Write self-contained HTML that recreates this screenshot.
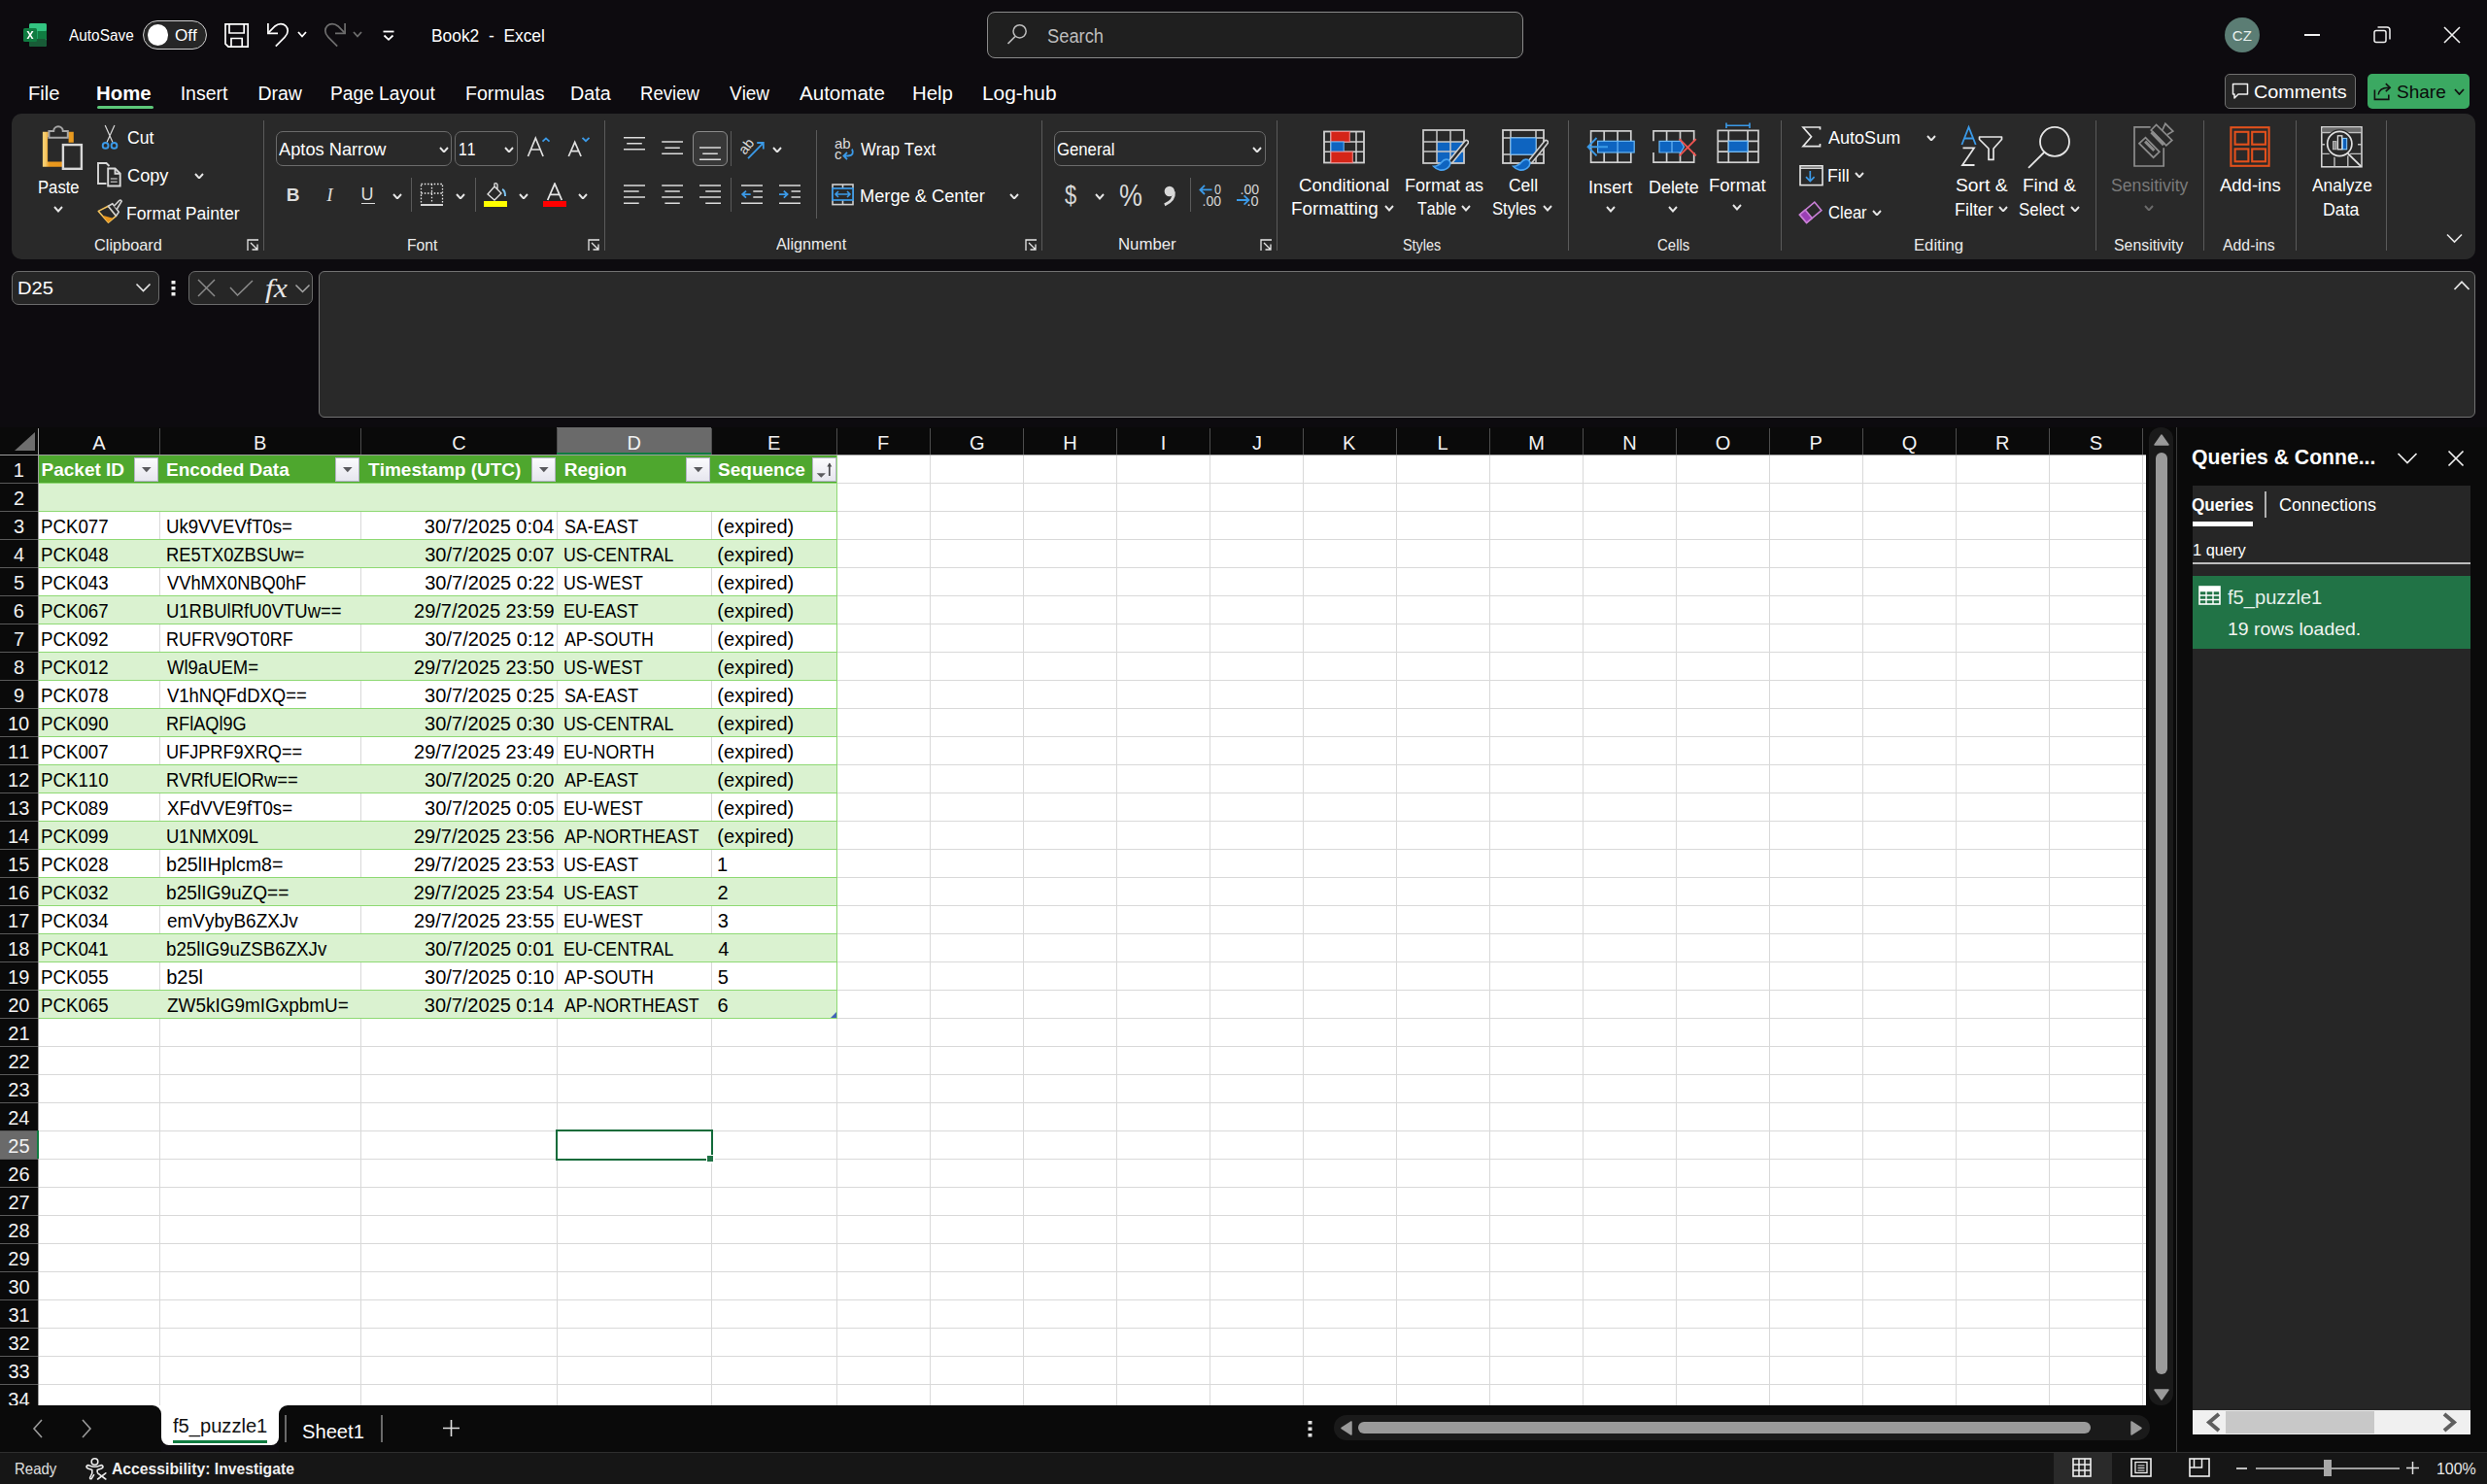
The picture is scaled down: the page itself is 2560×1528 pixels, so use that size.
<!DOCTYPE html><html><head><meta charset="utf-8"><title>Book2 - Excel</title><style>*{margin:0;padding:0}
html,body{width:2560px;height:1528px;overflow:hidden}
body{background:#0d0b0f;position:relative;font-family:"Liberation Sans",sans-serif;font-kerning:none;font-variant-ligatures:none;-webkit-font-smoothing:antialiased}
.t{position:absolute;white-space:pre;line-height:1;transform-origin:0 0}
.b{position:absolute;display:block}
</style></head><body><svg class="b" style="left:24px;top:24px;" width="24" height="24" viewBox="0 0 24 24">
      <rect x="6" y="0" width="18" height="24" rx="2" fill="#21a366"/>
      <rect x="6" y="0" width="18" height="8" rx="2" fill="#33c481"/>
      <rect x="6" y="8" width="9" height="8" fill="#21a366"/>
      <rect x="15" y="8" width="9" height="8" fill="#107c41"/>
      <rect x="6" y="16" width="18" height="8" rx="2" fill="#185c37"/>
      <rect x="0" y="5" width="14" height="14" rx="1.5" fill="#107c41"/>
      <path d="M3.5 8 L6 12 L3.5 16 H5.4 L7 13.3 L8.6 16 H10.5 L8 12 L10.5 8 H8.6 L7 10.7 L5.4 8 Z" fill="#fff"/></svg><div class="t" style="left:70.97px;top:28.96px;font-size:16px;color:#ffffff;transform:scaleX(0.9615);">AutoSave</div><div class="b" style="left:147px;top:21px;width:66px;height:30px;background:#262626;border:1.5px solid #d0d0d0;box-sizing:border-box;border-radius:15px;"></div><div class="b" style="left:151.5px;top:25px;width:21.5px;height:21.5px;background:#ffffff;border-radius:11px;"></div><div class="t" style="left:180.19px;top:28.96px;font-size:16px;color:#ffffff;transform:scaleX(1.0679);">Off</div><svg class="b" style="left:230px;top:23px;" width="27" height="27" viewBox="0 0 27 27"><path d="M2 1.8 H25.2 V25.2 H5 L2 22.2 Z M6 1.8 V11 H21.2 V1.8 M8 25.2 V16.5 H19.2 V25.2" stroke="#ffffff" stroke-width="1.7" fill="none"/></svg><svg class="b" style="left:274px;top:23px;" width="26" height="26" viewBox="0 0 26 26"><path d="M1.9 1 V11.3 H12" stroke="#ffffff" stroke-width="1.7" fill="none"/><path d="M2.4 10.6 L9 4 C11 2.3 13 1.6 15 1.6 C19 1.6 22.2 4.6 22.2 8.8 C22.2 11.5 21 13.4 19 15.3 L9.8 24.6" stroke="#ffffff" stroke-width="1.7" fill="none"/></svg><svg class="b" style="left:305.5px;top:32px;" width="10" height="6.5" viewBox="0 0 10 6.5"><path d="M1 1 L5.0 5.5 L9 1" stroke="#ffffff" stroke-width="1.8" fill="none"/></svg><svg class="b" style="left:331px;top:23px;" width="26" height="26" viewBox="0 0 26 26"><path d="M24.1 1 V11.3 H14" stroke="#6e6e6e" stroke-width="1.7" fill="none"/><path d="M23.6 10.6 L17 4 C15 2.3 13 1.6 11 1.6 C7 1.6 3.8 4.6 3.8 8.8 C3.8 11.5 5 13.4 7 15.3 L16.2 24.6" stroke="#6e6e6e" stroke-width="1.7" fill="none"/></svg><svg class="b" style="left:362.5px;top:32px;" width="10" height="6.5" viewBox="0 0 10 6.5"><path d="M1 1 L5.0 5.5 L9 1" stroke="#6e6e6e" stroke-width="1.8" fill="none"/></svg><svg class="b" style="left:393px;top:31px;" width="14" height="12" viewBox="0 0 14 12"><path d="M1.5 1.5 H12.5" stroke="#ffffff" stroke-width="1.8"/><path d="M2.5 5.5 L7 9.8 L11.5 5.5" stroke="#ffffff" stroke-width="1.8" fill="none"/></svg><div class="t" style="left:443.57px;top:27.54px;font-size:18.5px;color:#ffffff;transform:scaleX(0.9395);">Book2  -  Excel</div><div class="b" style="left:1016px;top:12px;width:552px;height:48px;background:#1f1f1f;border:1.5px solid #8a8a8a;box-sizing:border-box;border-radius:8px;"></div><svg class="b" style="left:1035px;top:22px;" width="24" height="26" viewBox="0 0 24 26"><circle cx="14.6" cy="10.3" r="6.6" stroke="#bdbdbd" stroke-width="1.5" fill="none"/><path d="M10 15.5 L2.5 23" stroke="#bdbdbd" stroke-width="1.7"/></svg><div class="t" style="left:1078.17px;top:27.15px;font-size:20.5px;color:#bdbdbd;transform:scaleX(0.8933);">Search</div><div class="b" style="left:2290px;top:18px;width:36px;height:36px;background:#5b7d74;border-radius:18px;"></div><div class="t" style="left:2297.86px;top:29.30px;font-size:15px;color:#e8f0ee;">CZ</div><div class="b" style="left:2372px;top:35px;width:16px;height:1.5px;background:#f0f0f0;"></div><svg class="b" style="left:2443px;top:27px;" width="18" height="18" viewBox="0 0 18 18"><rect x="1" y="4.5" width="12" height="12" rx="2" stroke="#f0f0f0" stroke-width="1.5" fill="none"/><path d="M4.5 1 H14 Q17 1 17 4 V13.5" stroke="#f0f0f0" stroke-width="1.5" fill="none"/></svg><svg class="b" style="left:2515px;top:27px;" width="18" height="18" viewBox="0 0 18 18"><path d="M1 1 L17 17 M17 1 L1 17" stroke="#f0f0f0" stroke-width="1.6"/></svg>
<div class="t" style="left:29.34px;top:87.49px;font-size:19.5px;color:#ffffff;transform:scaleX(1.0361);">File</div><div class="t" style="left:99.14px;top:87.49px;font-size:19.5px;color:#ffffff;font-weight:700;transform:scaleX(1.0439);">Home</div><div class="t" style="left:185.70px;top:87.49px;font-size:19.5px;color:#ffffff;">Insert</div><div class="t" style="left:265.40px;top:87.49px;font-size:19.5px;color:#ffffff;">Draw</div><div class="t" style="left:340.43px;top:87.49px;font-size:19.5px;color:#ffffff;transform:scaleX(0.9836);">Page Layout</div><div class="t" style="left:479.09px;top:87.49px;font-size:19.5px;color:#ffffff;transform:scaleX(1.0043);">Formulas</div><div class="t" style="left:587.38px;top:87.49px;font-size:19.5px;color:#ffffff;transform:scaleX(1.0103);">Data</div><div class="t" style="left:659.08px;top:87.49px;font-size:19.5px;color:#ffffff;transform:scaleX(0.9522);">Review</div><div class="t" style="left:750.92px;top:87.49px;font-size:19.5px;color:#ffffff;transform:scaleX(0.9709);">View</div><div class="t" style="left:822.96px;top:87.49px;font-size:19.5px;color:#ffffff;transform:scaleX(1.0538);">Automate</div><div class="t" style="left:938.93px;top:87.49px;font-size:19.5px;color:#ffffff;transform:scaleX(1.0455);">Help</div><div class="t" style="left:1010.89px;top:87.49px;font-size:19.5px;color:#ffffff;transform:scaleX(1.0688);">Log-hub</div><div class="b" style="left:100px;top:109px;width:58px;height:3px;background:#5dc779;border-radius:1.5px;"></div><div class="b" style="left:2290px;top:76px;width:135px;height:36px;background:#262626;border:1px solid #707070;box-sizing:border-box;border-radius:5px;"></div><svg class="b" style="left:2297px;top:85px;" width="18" height="18" viewBox="0 0 18 18"><path d="M1.5 1.5 H16.5 V12 H7 L3 16 V12 H1.5 Z" stroke="#f0f0f0" stroke-width="1.5" fill="none" stroke-linejoin="round"/></svg><div class="t" style="left:2319.99px;top:85.84px;font-size:18.5px;color:#ffffff;transform:scaleX(1.0703);">Comments</div><div class="b" style="left:2437px;top:76px;width:105px;height:36px;background:#3ba962;border-radius:5px;"></div><svg class="b" style="left:2440px;top:84px;" width="26" height="22" viewBox="0 0 26 22"><path d="M4.4 8.6 V18.4 H18.8 V13.4" stroke="#111" stroke-width="1.6" fill="none"/><path d="M8.2 13.5 C8.8 8.4 12.5 6 19.2 6.2" stroke="#111" stroke-width="1.6" fill="none"/><path d="M15.8 2.2 L20.2 6.2 L15.8 10.2" stroke="#111" stroke-width="1.6" fill="none"/></svg><div class="t" style="left:2467.14px;top:85.84px;font-size:18.5px;color:#0a0a0a;transform:scaleX(1.0272);">Share</div><svg class="b" style="left:2525.5px;top:91px;" width="11" height="7" viewBox="0 0 11 7"><path d="M1 1 L5.5 6 L10 1" stroke="#111" stroke-width="1.8" fill="none"/></svg>
<div class="b" style="left:12px;top:117px;width:2536px;height:150px;background:#292929;border-radius:10px;"></div><svg class="b" style="left:40px;top:125px;" width="50" height="55" viewBox="0 0 50 55">
      <defs><linearGradient id="og" x1="0" x2="1"><stop offset="0" stop-color="#f7cd6e"/><stop offset="0.25" stop-color="#ea9a1e"/><stop offset="1" stop-color="#e8951c"/></linearGradient></defs>
      <path d="M17 13.3 H6.5 V44.2 H24" stroke="url(#og)" stroke-width="5.2" fill="none"/>
      <path d="M28 13.3 H33.2 V21.7" stroke="#e99a1f" stroke-width="5.2" fill="none"/>
      <path d="M10.4 16.8 V10 H15.2 A4.8 4.8 0 0 1 24.8 10 H29.8 V16.8 Z" stroke="#a6a6a6" stroke-width="2" fill="#292929"/>
      <rect x="24.9" y="24.1" width="19" height="24.7" stroke="#d8d8d8" stroke-width="2.4" fill="#292929"/></svg><div class="t" style="left:39.13px;top:185.19px;font-size:17.5px;color:#ffffff;transform:scaleX(0.9521);">Paste</div><svg class="b" style="left:55px;top:212px;" width="10" height="6.5" viewBox="0 0 10 6.5"><path d="M1 1 L5.0 5.5 L9 1" stroke="#e6e6e6" stroke-width="1.9" fill="none"/></svg><svg class="b" style="left:100px;top:125px;" width="26" height="30" viewBox="0 0 26 30"><path d="M8.2 3.9 L16 21.6 M17.9 3.9 L10 21.6" stroke="#d8d8d8" stroke-width="1.2" fill="none"/>
       <circle cx="8.6" cy="24.9" r="2.9" stroke="#3b9ae8" stroke-width="1.9" fill="none"/><circle cx="17.5" cy="24.9" r="2.9" stroke="#3b9ae8" stroke-width="1.9" fill="none"/></svg><div class="t" style="left:130.60px;top:134.19px;font-size:17.5px;color:#ffffff;transform:scaleX(1.0108);">Cut</div><svg class="b" style="left:100px;top:167px;" width="26" height="27" viewBox="0 0 26 27"><path d="M9.5 22 H1 V1 H9.5 L12.5 4" stroke="#d8d8d8" stroke-width="1.9" fill="none"/>
       <path d="M11.2 6.5 H18.5 L23.7 11.7 V24.5 H11.2 Z" stroke="#d8d8d8" stroke-width="1.9" fill="none"/><path d="M18.5 6.5 V11.7 H23.7" stroke="#d8d8d8" stroke-width="1.9" fill="none"/><path d="M13.8 17 H20.7 M13.8 20.2 H20.7" stroke="#a8a8a8" stroke-width="1.5" fill="none"/></svg><div class="t" style="left:130.58px;top:173.19px;font-size:17.5px;color:#ffffff;transform:scaleX(1.0393);">Copy</div><svg class="b" style="left:199.5px;top:177.5px;" width="10" height="6.5" viewBox="0 0 10 6.5"><path d="M1 1 L5.0 5.5 L9 1" stroke="#e6e6e6" stroke-width="1.9" fill="none"/></svg><svg class="b" style="left:100px;top:205px;" width="27" height="27" viewBox="0 0 27 27"><path d="M1.3 12.4 L11.4 7.2 L19.5 17.3 L11.4 24.1 Z" stroke="#f3c35e" stroke-width="1.6" fill="#292929" stroke-linejoin="round"/>
      <path d="M5.5 16.8 L16.5 19.8 L11.4 24.1 Z" fill="#e8951c"/>
      <path d="M11.4 7.2 L15.8 4.7 L22.3 13.2 L19.5 17.3 Z" stroke="#d0d0d0" stroke-width="1.6" fill="#292929" stroke-linejoin="round"/>
      <path d="M17.3 7.2 L22.6 1.6 Q24.2 0.6 25.2 2.2 L20.5 10" stroke="#d0d0d0" stroke-width="1.6" fill="#292929"/></svg><div class="t" style="left:130.25px;top:212.19px;font-size:17.5px;color:#ffffff;transform:scaleX(1.0078);">Format Painter</div><div class="t" style="left:97.17px;top:243.61px;font-size:17px;color:#ececec;transform:scaleX(0.9604);">Clipboard</div><svg class="b" style="left:254px;top:246px;" width="13" height="13" viewBox="0 0 13 13"><path d="M1 12 V1 H12" stroke="#e6e6e6" stroke-width="1.3" fill="none"/><path d="M4 4 L11 11 M11 5.5 V11 H5.5" stroke="#e6e6e6" stroke-width="1.3" fill="none"/></svg><div class="b" style="left:271px;top:124px;width:1px;height:134px;background:#5a5a5a;"></div><div class="b" style="left:284px;top:135px;width:181px;height:36px;background:#292929;border:1px solid #6b6b6b;box-sizing:border-box;border-radius:7px;"></div><div class="t" style="left:287.46px;top:146.19px;font-size:17.5px;color:#ffffff;transform:scaleX(1.0423);">Aptos Narrow</div><svg class="b" style="left:451.5px;top:150.5px;" width="10" height="6.5" viewBox="0 0 10 6.5"><path d="M1 1 L5.0 5.5 L9 1" stroke="#e6e6e6" stroke-width="1.9" fill="none"/></svg><div class="b" style="left:468px;top:135px;width:65px;height:36px;background:#292929;border:1px solid #6b6b6b;box-sizing:border-box;border-radius:7px;"></div><div class="t" style="left:472.30px;top:146.19px;font-size:17.5px;color:#ffffff;transform:scaleX(0.8971);">11</div><svg class="b" style="left:519px;top:150.5px;" width="10" height="6.5" viewBox="0 0 10 6.5"><path d="M1 1 L5.0 5.5 L9 1" stroke="#e6e6e6" stroke-width="1.9" fill="none"/></svg><svg class="b" style="left:542px;top:139px;" width="26" height="24" viewBox="0 0 26 24"><path d="M1.5 22 L9.3 3.2 L17.1 22 M4.6 15 H14" stroke="#e0e0e0" stroke-width="1.7" fill="none"/><path d="M16.5 6.6 L20 3.4 L23.5 6.6" stroke="#3b9ae8" stroke-width="1.8" fill="none"/></svg><svg class="b" style="left:584px;top:139px;" width="24" height="24" viewBox="0 0 24 24"><path d="M1.3 22 L7.7 7.4 L14.1 22 M3.8 16.6 H11.6" stroke="#e0e0e0" stroke-width="1.7" fill="none"/><path d="M15.5 2.8 L19 6.2 L22.5 2.8" stroke="#3b9ae8" stroke-width="1.8" fill="none"/></svg><div class="t" style="left:294.73px;top:190.92px;font-size:19px;color:#dcdcdc;font-weight:700;">B</div><div class="t" style="left:336.25px;top:190.92px;font-size:19px;color:#dcdcdc;font-style:italic;font-family:'Liberation Serif'">I</div><div class="t" style="left:371.61px;top:190.76px;font-size:18px;color:#dcdcdc;">U</div><div class="b" style="left:372px;top:208.5px;width:14px;height:1.5px;background:#dcdcdc;"></div><svg class="b" style="left:403.5px;top:198.5px;" width="10" height="6.5" viewBox="0 0 10 6.5"><path d="M1 1 L5.0 5.5 L9 1" stroke="#e6e6e6" stroke-width="1.9" fill="none"/></svg><div class="b" style="left:423px;top:183px;width:1px;height:35px;background:#5a5a5a;"></div><svg class="b" style="left:432px;top:188px;" width="25" height="25" viewBox="0 0 25 25"><path d="M1.5 1.5 H23.5 V20.5 M1.5 20.5 V1.5 M12.5 1.5 V20.5 M1.5 11 H23.5" stroke="#e6e6e6" stroke-width="1.3" stroke-dasharray="1.6 1.7" fill="none"/><path d="M1 23 H24" stroke="#e6e6e6" stroke-width="1.8"/></svg><svg class="b" style="left:468.5px;top:198.5px;" width="10" height="6.5" viewBox="0 0 10 6.5"><path d="M1 1 L5.0 5.5 L9 1" stroke="#e6e6e6" stroke-width="1.9" fill="none"/></svg><div class="b" style="left:489px;top:183px;width:1px;height:35px;background:#5a5a5a;"></div><svg class="b" style="left:497px;top:188px;" width="26" height="26" viewBox="0 0 26 26"><path d="M5 12 L12 4 L19 11 L12 18 Z M12 4 V1 Q14 0 15 2 V7" stroke="#e6e6e6" stroke-width="1.3" fill="none"/><path d="M20 7 Q23 8 23 14" stroke="#7cc2f0" stroke-width="2" fill="none"/><rect x="1" y="19" width="24" height="6" fill="#ffff00"/></svg><svg class="b" style="left:533.5px;top:198.5px;" width="10" height="6.5" viewBox="0 0 10 6.5"><path d="M1 1 L5.0 5.5 L9 1" stroke="#e6e6e6" stroke-width="1.9" fill="none"/></svg><svg class="b" style="left:558px;top:188px;" width="26" height="26" viewBox="0 0 26 26"><path d="M5.7 18 L13 1.2 L20.3 18 M8.3 12.3 H17.7" stroke="#e6e6e6" stroke-width="1.8" fill="none"/><rect x="1" y="19" width="24" height="6" fill="#ff0000"/></svg><svg class="b" style="left:594.5px;top:198.5px;" width="10" height="6.5" viewBox="0 0 10 6.5"><path d="M1 1 L5.0 5.5 L9 1" stroke="#e6e6e6" stroke-width="1.9" fill="none"/></svg><div class="t" style="left:418.71px;top:243.61px;font-size:17px;color:#ececec;transform:scaleX(0.9231);">Font</div><svg class="b" style="left:605px;top:246px;" width="13" height="13" viewBox="0 0 13 13"><path d="M1 12 V1 H12" stroke="#e6e6e6" stroke-width="1.3" fill="none"/><path d="M4 4 L11 11 M11 5.5 V11 H5.5" stroke="#e6e6e6" stroke-width="1.3" fill="none"/></svg><div class="b" style="left:622px;top:124px;width:1px;height:134px;background:#5a5a5a;"></div><div class="b" style="left:713px;top:135px;width:36px;height:36px;background:#383838;border:1px solid #8a8a8a;box-sizing:border-box;border-radius:6px;"></div><svg class="b" style="left:630px;top:125px;" width="260" height="100" viewBox="0 0 260 100"><path d="M12 16.69999999999999 H34 M15.200000000000045 22.80000000000001 H30.799999999999955 M12 28.80000000000001 H34 M51.200000000000045 20.900000000000006 H73 M54.39999999999998 27.19999999999999 H69.79999999999995 M51.200000000000045 33.19999999999999 H73 M90 27 H112 M93.20000000000005 33.19999999999999 H108.79999999999995 M90 39.19999999999999 H112 M12 66 H34 M12 72.1 H27.700000000000045 M12 78.1 H34 M12 84.19999999999999 H27.700000000000045 M51.200000000000045 66 H73 M54.39999999999998 72.1 H69.79999999999995 M51.200000000000045 78.1 H73 M54.39999999999998 84.19999999999999 H69.79999999999995 M90 66 H112 M96.20000000000005 72.1 H112 M90 78.1 H112 M96.20000000000005 84.19999999999999 H112 M133 66 H155 M145.29999999999995 72.1 H155 M145.29999999999995 78.1 H155 M133 84.19999999999999 H155 M172 66 H194 M184.5 72.1 H194 M184.5 78.1 H194 M172 84.19999999999999 H194" stroke="#dcdcdc" stroke-width="1.5" fill="none"/><path d="M142.70000000000005 75.1 H134.5 M138 71.6 L134.20000000000005 75.1 L138 78.6" stroke="#3b9ae8" stroke-width="1.8" fill="none"/><path d="M172 75.1 H180.29999999999995 M176.79999999999995 71.6 L180.60000000000002 75.1 L176.79999999999995 78.6" stroke="#3b9ae8" stroke-width="1.8" fill="none"/><text x="0" y="0" transform="translate(137,35) rotate(-52)" font-family="Liberation Sans" font-size="14.5" fill="#dcdcdc">ab</text><path d="M140 38.19999999999999 L155.5 22.30000000000001 M149.20000000000005 22 H155.79999999999995 V28.599999999999994" stroke="#3b9ae8" stroke-width="1.8" fill="none"/><text x="229" y="27.69999999999999" font-family="Liberation Sans" font-size="15" fill="#dcdcdc">ab</text><text x="229" y="38.69999999999999" font-family="Liberation Sans" font-size="15" fill="#dcdcdc">c</text><path d="M247 28.5 Q250 35 243 35.5 H239 M242 31.80000000000001 L238.39999999999998 35.5 L242 39.19999999999999" stroke="#3b9ae8" stroke-width="1.8" fill="none"/><g stroke="#d0d0d0" stroke-width="1.6" fill="none"><rect x="227" y="65" width="21" height="20.6"/><path d="M237.5 65 V69 M237.5 81 V85.6"/></g><rect x="227" y="69" width="21" height="12" stroke="#3b9ae8" stroke-width="1.7" fill="#292929"/><path d="M230 75 H245 M233 72 L230 75 L233 78 M242 72 L245 75 L242 78" stroke="#3b9ae8" stroke-width="1.6" fill="none"/></svg><div class="b" style="left:752px;top:135px;width:1px;height:36px;background:#5a5a5a;"></div><svg class="b" style="left:794.5px;top:150.5px;" width="10" height="6.5" viewBox="0 0 10 6.5"><path d="M1 1 L5.0 5.5 L9 1" stroke="#e6e6e6" stroke-width="1.9" fill="none"/></svg><div class="b" style="left:840px;top:134px;width:1px;height:91px;background:#5a5a5a;"></div><div class="b" style="left:752px;top:183px;width:1px;height:35px;background:#5a5a5a;"></div><div class="t" style="left:885.93px;top:145.69px;font-size:17.5px;color:#ffffff;transform:scaleX(0.9565);">Wrap Text</div><div class="t" style="left:884.50px;top:193.69px;font-size:17.5px;color:#ffffff;transform:scaleX(1.0427);">Merge &amp; Center</div><svg class="b" style="left:1038.5px;top:198.5px;" width="10" height="6.5" viewBox="0 0 10 6.5"><path d="M1 1 L5.0 5.5 L9 1" stroke="#e6e6e6" stroke-width="1.9" fill="none"/></svg><div class="t" style="left:798.97px;top:243.11px;font-size:17px;color:#ececec;transform:scaleX(0.9544);">Alignment</div><svg class="b" style="left:1055px;top:246px;" width="13" height="13" viewBox="0 0 13 13"><path d="M1 12 V1 H12" stroke="#e6e6e6" stroke-width="1.3" fill="none"/><path d="M4 4 L11 11 M11 5.5 V11 H5.5" stroke="#e6e6e6" stroke-width="1.3" fill="none"/></svg><div class="b" style="left:1072px;top:124px;width:1px;height:134px;background:#5a5a5a;"></div><div class="b" style="left:1085px;top:135px;width:218px;height:36px;background:#292929;border:1px solid #6b6b6b;box-sizing:border-box;border-radius:7px;"></div><div class="t" style="left:1087.66px;top:145.69px;font-size:17.5px;color:#ffffff;transform:scaleX(0.9550);">General</div><svg class="b" style="left:1289px;top:150.5px;" width="10" height="6.5" viewBox="0 0 10 6.5"><path d="M1 1 L5.0 5.5 L9 1" stroke="#e6e6e6" stroke-width="1.9" fill="none"/></svg><div class="t" style="left:1096.16px;top:186.80px;font-size:28px;color:#d8d8d8;transform:scaleX(0.7827);">$</div><svg class="b" style="left:1126.5px;top:199px;" width="10" height="6.5" viewBox="0 0 10 6.5"><path d="M1 1 L5.0 5.5 L9 1" stroke="#e6e6e6" stroke-width="1.9" fill="none"/></svg><div class="t" style="left:1152.04px;top:186.26px;font-size:31px;color:#d8d8d8;transform:scaleX(0.8677);">%</div><svg class="b" style="left:1196px;top:190px;" width="15" height="23" viewBox="0 0 15 23"><circle cx="7.8" cy="7" r="5.2" fill="#d8d8d8"/><path d="M12.3 7.5 Q13.2 16.5 2.8 20.8" stroke="#d8d8d8" stroke-width="3" fill="none"/></svg><div class="b" style="left:1225px;top:183px;width:1px;height:35px;background:#5a5a5a;"></div><svg class="b" style="left:1232px;top:186px;" width="28" height="28" viewBox="0 0 28 28"><path d="M15.5 9.4 H3.6 M8 4.8 L3.4 9.4 L8 14" stroke="#3b9ae8" stroke-width="1.8" fill="none"/><text x="18" y="13.8" font-family="Liberation Sans" font-size="15" fill="#d8d8d8" textLength="7" lengthAdjust="spacingAndGlyphs">0</text><text x="5.5" y="25.8" font-family="Liberation Sans" font-size="15" fill="#d8d8d8" textLength="19.5" lengthAdjust="spacingAndGlyphs">.00</text></svg><svg class="b" style="left:1270px;top:186px;" width="28" height="28" viewBox="0 0 28 28"><text x="6.5" y="13.8" font-family="Liberation Sans" font-size="15" fill="#d8d8d8" textLength="19.5" lengthAdjust="spacingAndGlyphs">.00</text><path d="M3 20 H15.2 M10.6 15.4 L15.4 20 L10.6 24.6" stroke="#3b9ae8" stroke-width="1.8" fill="none"/><text x="13.5" y="25.8" font-family="Liberation Sans" font-size="15" fill="#d8d8d8" textLength="12" lengthAdjust="spacingAndGlyphs">.0</text></svg><div class="t" style="left:1150.62px;top:243.11px;font-size:17px;color:#ececec;transform:scaleX(0.9866);">Number</div><svg class="b" style="left:1297px;top:246px;" width="13" height="13" viewBox="0 0 13 13"><path d="M1 12 V1 H12" stroke="#e6e6e6" stroke-width="1.3" fill="none"/><path d="M4 4 L11 11 M11 5.5 V11 H5.5" stroke="#e6e6e6" stroke-width="1.3" fill="none"/></svg><div class="b" style="left:1314px;top:124px;width:1px;height:134px;background:#5a5a5a;"></div><svg class="b" style="left:1360px;top:132px;" width="47" height="38" viewBox="0 0 47 38"><g transform="translate(2,2.5)"><rect x="1" y="1" width="41" height="32" stroke="#d0d0d0" stroke-width="1.8" fill="none"/><path d="M8 1 V33" stroke="#d0d0d0" stroke-width="1.5"/><path d="M34 1 V33" stroke="#d0d0d0" stroke-width="1.5"/><path d="M1 11.5 H42" stroke="#d0d0d0" stroke-width="1.5"/><path d="M1 21.7 H42" stroke="#d0d0d0" stroke-width="1.5"/><rect x="8" y="1" width="19.3" height="10.5" fill="#d42518" stroke="#f08a8a" stroke-width="1"/><rect x="8" y="11.5" width="13.2" height="10.2" fill="#0e64c0" stroke="#6ab8f7" stroke-width="1"/><rect x="8" y="21.7" width="22.3" height="11.4" fill="#d42518" stroke="#f08a8a" stroke-width="1"/></g></svg><div class="t" style="left:1337.05px;top:183.19px;font-size:17.5px;color:#ffffff;transform:scaleX(1.0643);">Conditional</div><div class="t" style="left:1329.46px;top:207.19px;font-size:17.5px;color:#ffffff;transform:scaleX(1.0731);">Formatting</div><svg class="b" style="left:1425px;top:211px;" width="10" height="6.5" viewBox="0 0 10 6.5"><path d="M1 1 L5.0 5.5 L9 1" stroke="#e6e6e6" stroke-width="1.9" fill="none"/></svg><svg class="b" style="left:1464px;top:133px;" width="48" height="44" viewBox="0 0 48 44"><rect x="15" y="13" width="28" height="22" fill="#0e64c0"/><rect x="1" y="1" width="42" height="34" stroke="#c8c8c8" stroke-width="1.8" fill="none"/><path d="M15 1 V35" stroke="#c8c8c8" stroke-width="1.5"/><path d="M29 1 V35" stroke="#c8c8c8" stroke-width="1.5"/><path d="M1 13 H43" stroke="#c8c8c8" stroke-width="1.5"/><path d="M1 23 H43" stroke="#c8c8c8" stroke-width="1.5"/><path d="M45.4 13.5 L30 32.5" stroke="#cfcfcf" stroke-width="5.6" stroke-linecap="round"/><path d="M45.4 13.5 L30 32.5" stroke="#292929" stroke-width="2.4" stroke-linecap="round"/><path d="M11.6 38.3 Q17 38 20 34 Q23 30 27 31.6 Q30 34 28 38 Q24 43 18 42 Q14 41 11.6 38.3 Z" fill="#0e64c0" stroke="#4aa3f0" stroke-width="1.6"/></svg><div class="t" style="left:1445.52px;top:183.19px;font-size:17.5px;color:#ffffff;transform:scaleX(1.0300);">Format as</div><div class="t" style="left:1458.64px;top:207.19px;font-size:17.5px;color:#ffffff;transform:scaleX(0.9154);">Table</div><svg class="b" style="left:1504px;top:211px;" width="10" height="6.5" viewBox="0 0 10 6.5"><path d="M1 1 L5.0 5.5 L9 1" stroke="#e6e6e6" stroke-width="1.9" fill="none"/></svg><svg class="b" style="left:1546px;top:133px;" width="48" height="44" viewBox="0 0 48 44"><rect x="1" y="1" width="42" height="34" stroke="#d0d0d0" stroke-width="1.8" fill="none"/><path d="M9 1 V35" stroke="#d0d0d0" stroke-width="1.5"/><path d="M35 1 V35" stroke="#d0d0d0" stroke-width="1.5"/><path d="M1 9 H43" stroke="#d0d0d0" stroke-width="1.5"/><path d="M1 26 H43" stroke="#d0d0d0" stroke-width="1.5"/><rect x="9" y="9" width="26" height="17" fill="#0e64c0" stroke="#6ab8f7" stroke-width="1"/><path d="M45.4 13.5 L30 32.5" stroke="#cfcfcf" stroke-width="5.6" stroke-linecap="round"/><path d="M45.4 13.5 L30 32.5" stroke="#292929" stroke-width="2.4" stroke-linecap="round"/><path d="M11.6 38.3 Q17 38 20 34 Q23 30 27 31.6 Q30 34 28 38 Q24 43 18 42 Q14 41 11.6 38.3 Z" fill="#0e64c0" stroke="#4aa3f0" stroke-width="1.6"/></svg><div class="t" style="left:1553.11px;top:183.19px;font-size:17.5px;color:#ffffff;transform:scaleX(0.9969);">Cell</div><div class="t" style="left:1536.24px;top:207.19px;font-size:17.5px;color:#ffffff;transform:scaleX(0.9518);">Styles</div><svg class="b" style="left:1588px;top:211px;" width="10" height="6.5" viewBox="0 0 10 6.5"><path d="M1 1 L5.0 5.5 L9 1" stroke="#e6e6e6" stroke-width="1.9" fill="none"/></svg><div class="t" style="left:1444.35px;top:243.61px;font-size:17px;color:#ececec;transform:scaleX(0.8462);">Styles</div><div class="b" style="left:1614px;top:124px;width:1px;height:134px;background:#5a5a5a;"></div><svg class="b" style="left:1630px;top:130px;" width="56" height="42" viewBox="0 0 56 42"><g stroke="#d0d0d0" stroke-width="1.7" fill="none"><rect x="7.6" y="4.9" width="41.2" height="32.3"/><path d="M21.2 4.9 V37.2 M35.1 4.9 V37.2"/></g><rect x="14.6" y="15.3" width="37.6" height="11.7" fill="#0e64c0" stroke="#6ab8f7" stroke-width="1.2"/><path d="M35.1 15.3 V27" stroke="#6ab8f7" stroke-width="1.2"/><path d="M25 21.2 H6 M13.5 12 L4.6 21.2 L13.5 30.4" stroke="#3b9ae8" stroke-width="1.9" fill="none"/></svg><div class="t" style="left:1634.83px;top:185.19px;font-size:17.5px;color:#ffffff;transform:scaleX(1.0351);">Insert</div><svg class="b" style="left:1652.5px;top:212px;" width="10" height="6.5" viewBox="0 0 10 6.5"><path d="M1 1 L5.0 5.5 L9 1" stroke="#e6e6e6" stroke-width="1.9" fill="none"/></svg><svg class="b" style="left:1700px;top:130px;" width="50" height="42" viewBox="0 0 50 42"><g stroke="#d0d0d0" stroke-width="1.7" fill="none"><path d="M2 15.3 V4.9 H43.7 V15.3 M2 27 V37.2 H43.7 V27 M15.6 4.9 V15.3 M15.6 27 V37.2 M29.5 4.9 V15.3 M29.5 27 V37.2"/></g><path d="M8 15.3 H30 L33.5 21.2 L30 27 H8 Z" fill="#0e64c0" stroke="#6ab8f7" stroke-width="1.2"/><path d="M21 15.3 V27" stroke="#6ab8f7" stroke-width="1.2"/><path d="M28.7 13.2 L45.8 30.3 M45.8 13.2 L28.7 30.3" stroke="#ef5350" stroke-width="1.9"/></svg><div class="t" style="left:1697.03px;top:185.19px;font-size:17.5px;color:#ffffff;transform:scaleX(1.0233);">Delete</div><svg class="b" style="left:1717px;top:212px;" width="10" height="6.5" viewBox="0 0 10 6.5"><path d="M1 1 L5.0 5.5 L9 1" stroke="#e6e6e6" stroke-width="1.9" fill="none"/></svg><svg class="b" style="left:1765px;top:126px;" width="48" height="44" viewBox="0 0 48 44"><path d="M12 3.3 H36 M12 0.5 V6 M36 0.5 V6" stroke="#3b9ae8" stroke-width="1.6"/><g stroke="#d0d0d0" stroke-width="1.7" fill="none"><rect x="3.3" y="8.4" width="41.7" height="32.8"/><path d="M14.3 8.4 V41.2 M34 8.4 V41.2 M3.3 19.3 H45 M3.3 30.2 H45"/></g><rect x="14.3" y="19.3" width="19.7" height="10.9" fill="#0e64c0" stroke="#6ab8f7" stroke-width="1.2"/></svg><div class="t" style="left:1759.48px;top:183.19px;font-size:17.5px;color:#ffffff;transform:scaleX(1.0583);">Format</div><svg class="b" style="left:1783px;top:210px;" width="10" height="6.5" viewBox="0 0 10 6.5"><path d="M1 1 L5.0 5.5 L9 1" stroke="#e6e6e6" stroke-width="1.9" fill="none"/></svg><div class="t" style="left:1706.24px;top:243.61px;font-size:17px;color:#ececec;transform:scaleX(0.8814);">Cells</div><div class="b" style="left:1833px;top:124px;width:1px;height:134px;background:#5a5a5a;"></div><svg class="b" style="left:1854px;top:129px;" width="21" height="24" viewBox="0 0 21 24"><path d="M19.5 4.5 V2 H2 L10.5 11.8 L2 21.6 H19.5 V19" stroke="#e6e6e6" stroke-width="1.7" fill="none"/></svg><div class="t" style="left:1882.46px;top:133.69px;font-size:17.5px;color:#ffffff;transform:scaleX(1.0312);">AutoSum</div><svg class="b" style="left:1983px;top:138.5px;" width="10" height="6.5" viewBox="0 0 10 6.5"><path d="M1 1 L5.0 5.5 L9 1" stroke="#e6e6e6" stroke-width="1.9" fill="none"/></svg><svg class="b" style="left:1851px;top:169px;" width="26" height="24" viewBox="0 0 26 24"><rect x="2" y="1.8" width="23" height="19.8" stroke="#e6e6e6" stroke-width="1.6" fill="none"/><path d="M2 4.2 H25" stroke="#e6e6e6" stroke-width="1.4"/><path d="M12.3 7 V17.5 M8 13.2 L12.3 17.5 L16.6 13.2" stroke="#3b9ae8" stroke-width="1.7" fill="none"/></svg><div class="t" style="left:1881.05px;top:173.19px;font-size:17.5px;color:#ffffff;transform:scaleX(1.0128);">Fill</div><svg class="b" style="left:1908.5px;top:176.5px;" width="10" height="6.5" viewBox="0 0 10 6.5"><path d="M1 1 L5.0 5.5 L9 1" stroke="#e6e6e6" stroke-width="1.9" fill="none"/></svg><svg class="b" style="left:1850px;top:206px;" width="28" height="28" viewBox="0 0 28 28"><g transform="translate(13.7,12.8) rotate(-40)"><rect x="-10" y="-5.5" width="20" height="11" stroke="#c97fd6" stroke-width="1.6" fill="none"/><rect x="-10" y="-5.5" width="7.5" height="11" fill="#9b3fb5" stroke="#c97fd6" stroke-width="1.6"/></g></svg><div class="t" style="left:1881.66px;top:211.49px;font-size:17.5px;color:#ffffff;transform:scaleX(0.9474);">Clear</div><svg class="b" style="left:1927px;top:215.5px;" width="10" height="6.5" viewBox="0 0 10 6.5"><path d="M1 1 L5.0 5.5 L9 1" stroke="#e6e6e6" stroke-width="1.9" fill="none"/></svg><svg class="b" style="left:2015px;top:128px;" width="50" height="46" viewBox="0 0 50 46"><path d="M4.4 21 L11.5 3 L18.7 21 M7 14.5 H16" stroke="#3b9ae8" stroke-width="1.8" fill="none"/><path d="M5.5 24.4 H17 L5 42 H17.5" stroke="#e6e6e6" stroke-width="1.8" fill="none"/><path d="M22.5 13 H45.5 V15.5 L37 25 V36.4 H32 V25 L22.5 15.5 Z" stroke="#e6e6e6" stroke-width="1.7" fill="none" stroke-linejoin="round"/></svg><div class="t" style="left:2012.83px;top:183.19px;font-size:17.5px;color:#ffffff;transform:scaleX(1.0996);">Sort &amp;</div><div class="t" style="left:2011.53px;top:207.69px;font-size:17.5px;color:#ffffff;transform:scaleX(1.0226);">Filter</div><svg class="b" style="left:2057px;top:211.5px;" width="10" height="6.5" viewBox="0 0 10 6.5"><path d="M1 1 L5.0 5.5 L9 1" stroke="#e6e6e6" stroke-width="1.9" fill="none"/></svg><svg class="b" style="left:2085px;top:128px;" width="48" height="48" viewBox="0 0 48 48"><circle cx="30" cy="17.9" r="15" stroke="#e6e6e6" stroke-width="1.8" fill="none"/><path d="M19.5 28.5 L3 44.8" stroke="#e6e6e6" stroke-width="1.8"/></svg><div class="t" style="left:2082.44px;top:183.19px;font-size:17.5px;color:#ffffff;transform:scaleX(1.0845);">Find &amp;</div><div class="t" style="left:2078.23px;top:207.69px;font-size:17.5px;color:#ffffff;transform:scaleX(0.9641);">Select</div><svg class="b" style="left:2131px;top:211.5px;" width="10" height="6.5" viewBox="0 0 10 6.5"><path d="M1 1 L5.0 5.5 L9 1" stroke="#e6e6e6" stroke-width="1.9" fill="none"/></svg><div class="t" style="left:1969.63px;top:244.11px;font-size:17px;color:#ececec;transform:scaleX(0.9800);">Editing</div><div class="b" style="left:2157px;top:124px;width:1px;height:134px;background:#5a5a5a;"></div><svg class="b" style="left:2190px;top:122px;" width="50" height="52" viewBox="0 0 50 52"><g stroke="#8c8c8c" stroke-width="1.7" fill="none" stroke-linejoin="miter"><path d="M23.6 8.9 H7 V49 H37.2 V30.2"/><path d="M12 25.7 L18.5 19.6 L32.8 34.3 L26.6 40.2 Z"/><path d="M24.2 12 L29.6 6.4 L45.8 22.5 L39.8 27.9 Z"/><path d="M35.8 12 L38.9 5.3 L46.8 13.2 L41.1 16.6"/></g><path d="M17 24.8 L19.2 22.6 L28.5 31.9 L26.3 34.1 Z" fill="#8c8c8c"/><path d="M23.4 15.3 L26.1 12.6 L38.8 25.6 L36.1 28.3 Z" fill="#8c8c8c"/></svg><div class="t" style="left:2173.20px;top:183.19px;font-size:17.5px;color:#7a7a7a;transform:scaleX(1.0084);">Sensitivity</div><svg class="b" style="left:2207px;top:210.5px;" width="10" height="6.5" viewBox="0 0 10 6.5"><path d="M1 1 L5.0 5.5 L9 1" stroke="#6a6a6a" stroke-width="1.9" fill="none"/></svg><div class="t" style="left:2176.28px;top:244.11px;font-size:17px;color:#ececec;transform:scaleX(0.9324);">Sensitivity</div><div class="b" style="left:2268px;top:124px;width:1px;height:134px;background:#5a5a5a;"></div><svg class="b" style="left:2294px;top:129px;" width="44" height="44" viewBox="0 0 44 44"><g stroke="#e2501c" stroke-width="2.1" fill="none"><rect x="2.4" y="2.2" width="39.2" height="39.6"/><rect x="6.6" y="6.8" width="13.8" height="12.9"/><rect x="24.2" y="6.8" width="13.8" height="12.9"/><rect x="6.6" y="24.4" width="13.8" height="12.9"/><rect x="24.2" y="24.4" width="13.8" height="12.9"/></g></svg><div class="t" style="left:2284.96px;top:183.19px;font-size:17.5px;color:#ffffff;transform:scaleX(1.0568);">Add-ins</div><div class="t" style="left:2287.97px;top:244.11px;font-size:17px;color:#ececec;transform:scaleX(0.9299);">Add-ins</div><div class="b" style="left:2363px;top:124px;width:1px;height:134px;background:#5a5a5a;"></div><svg class="b" style="left:2388px;top:129px;" width="45" height="45" viewBox="0 0 45 45"><rect x="1.8" y="1.8" width="41.2" height="41" stroke="#dcdcdc" stroke-width="1.5" fill="none"/><rect x="2.6" y="2.8" width="39.6" height="4" fill="#6a6a6a"/><path d="M1 7.5 H43 M1 29.4 H43 M1 19.8 H5 M39 19.8 H43 M15 30 V42.5 M28.8 30 V42.5" stroke="#c0c0c0" stroke-width="1.4"/><circle cx="20.3" cy="19" r="12.6" stroke="#292929" stroke-width="4.5" fill="#292929"/><circle cx="20.3" cy="19" r="12.6" stroke="#e0e0e0" stroke-width="1.7" fill="none"/><rect x="13.4" y="16.6" width="3.6" height="8.2" fill="#8a8a8a" stroke="#c8c8c8" stroke-width="0.8"/><rect x="18.4" y="10.8" width="4.4" height="14" stroke="#e0e0e0" stroke-width="1.3" fill="#292929"/><rect x="23.5" y="13.4" width="4.2" height="11.4" fill="#0f5fb8" stroke="#8fd0ff" stroke-width="1"/><path d="M28.6 28.8 L42.4 42.4" stroke="#e0e0e0" stroke-width="1.8"/></svg><div class="t" style="left:2379.97px;top:183.19px;font-size:17.5px;color:#ffffff;transform:scaleX(0.9927);">Analyze</div><div class="t" style="left:2390.55px;top:207.69px;font-size:17.5px;color:#ffffff;transform:scaleX(1.0132);">Data</div><div class="b" style="left:2456px;top:124px;width:1px;height:134px;background:#5a5a5a;"></div><svg class="b" style="left:2518px;top:240px;" width="17" height="11" viewBox="0 0 17 11"><path d="M1 1.5 L8.5 9 L16 1.5" stroke="#e6e6e6" stroke-width="1.6" fill="none"/></svg>
<div class="b" style="left:12px;top:279px;width:152px;height:35px;background:#262626;border:1.2px solid #6b6b6b;box-sizing:border-box;border-radius:7px;"></div><div class="t" style="left:17.85px;top:288.26px;font-size:18px;color:#ffffff;transform:scaleX(1.1206);">D25</div><svg class="b" style="left:139px;top:291px;" width="17" height="11" viewBox="0 0 17 11"><path d="M1.5 1.5 L8.5 8.5 L15.5 1.5" stroke="#e6e6e6" stroke-width="1.6" fill="none"/></svg><svg class="b" style="left:176px;top:289px;" width="6" height="16" viewBox="0 0 6 16"><rect x="0.5" y="0" width="4" height="3.5" fill="#f0f0f0"/><rect x="0.5" y="6" width="4" height="3.5" fill="#f0f0f0"/><rect x="0.5" y="12" width="4" height="3.5" fill="#f0f0f0"/></svg><div class="b" style="left:194px;top:279px;width:128px;height:35px;background:#262626;border:1.2px solid #6b6b6b;box-sizing:border-box;border-radius:7px;"></div><svg class="b" style="left:202px;top:287px;" width="21" height="19" viewBox="0 0 21 19"><path d="M2 1 L19 18 M19 1 L2 18" stroke="#8a8a8a" stroke-width="1.5"/></svg><svg class="b" style="left:236px;top:288px;" width="25" height="17" viewBox="0 0 25 17"><path d="M1 8 L8.5 16 L24 1" stroke="#8a8a8a" stroke-width="1.5" fill="none"/></svg><svg class="b" style="left:268px;top:280px;" width="34" height="34" viewBox="0 0 34 34"><text x="5" y="25.5" font-family="Liberation Serif" font-style="italic" font-size="27" fill="#e6e6e6" textLength="23" lengthAdjust="spacingAndGlyphs">fx</text></svg><svg class="b" style="left:303px;top:292px;" width="17" height="10" viewBox="0 0 17 10"><path d="M1.5 1.5 L8.5 8.5 L15.5 1.5" stroke="#a6a6a6" stroke-width="1.5" fill="none"/></svg><div class="b" style="left:328px;top:279px;width:2220px;height:151px;background:#292929;border:1.5px solid #727272;box-sizing:border-box;border-radius:6px;"></div><svg class="b" style="left:2525px;top:288px;" width="18" height="12" viewBox="0 0 18 12"><path d="M1.5 10 L9 2.2 L16.5 10" stroke="#e6e6e6" stroke-width="1.8" fill="none"/></svg>
<div class="b" style="left:2209px;top:440px;width:351px;height:1055px;background:#0a0a0a;"></div><div class="b" style="left:40px;top:468px;width:2169px;height:979px;background:#ffffff;"></div><div class="b" style="left:0px;top:468px;width:39px;height:979px;background:#0a0a0a;"></div><div class="b" style="left:0px;top:440px;width:2209px;height:28px;background:#0a0a0a;"></div><div class="b" style="left:573px;top:440px;width:159px;height:28px;background:#6a6a6a;"></div><div class="b" style="left:0px;top:1164px;width:39px;height:29px;background:#6a6a6a;"></div><div class="b" style="left:164px;top:469px;width:1px;height:978px;background:#d9d9d9;"></div><div class="b" style="left:371px;top:469px;width:1px;height:978px;background:#d9d9d9;"></div><div class="b" style="left:573px;top:469px;width:1px;height:978px;background:#d9d9d9;"></div><div class="b" style="left:732px;top:469px;width:1px;height:978px;background:#d9d9d9;"></div><div class="b" style="left:861px;top:469px;width:1px;height:978px;background:#d9d9d9;"></div><div class="b" style="left:957px;top:469px;width:1px;height:978px;background:#d9d9d9;"></div><div class="b" style="left:1053px;top:469px;width:1px;height:978px;background:#d9d9d9;"></div><div class="b" style="left:1149px;top:469px;width:1px;height:978px;background:#d9d9d9;"></div><div class="b" style="left:1245px;top:469px;width:1px;height:978px;background:#d9d9d9;"></div><div class="b" style="left:1341px;top:469px;width:1px;height:978px;background:#d9d9d9;"></div><div class="b" style="left:1437px;top:469px;width:1px;height:978px;background:#d9d9d9;"></div><div class="b" style="left:1533px;top:469px;width:1px;height:978px;background:#d9d9d9;"></div><div class="b" style="left:1629px;top:469px;width:1px;height:978px;background:#d9d9d9;"></div><div class="b" style="left:1725px;top:469px;width:1px;height:978px;background:#d9d9d9;"></div><div class="b" style="left:1821px;top:469px;width:1px;height:978px;background:#d9d9d9;"></div><div class="b" style="left:1917px;top:469px;width:1px;height:978px;background:#d9d9d9;"></div><div class="b" style="left:2013px;top:469px;width:1px;height:978px;background:#d9d9d9;"></div><div class="b" style="left:2109px;top:469px;width:1px;height:978px;background:#d9d9d9;"></div><div class="b" style="left:2205px;top:469px;width:1px;height:978px;background:#d9d9d9;"></div><div class="b" style="left:40px;top:497px;width:2169px;height:1px;background:#d9d9d9;"></div><div class="b" style="left:40px;top:526px;width:2169px;height:1px;background:#d9d9d9;"></div><div class="b" style="left:40px;top:555px;width:2169px;height:1px;background:#d9d9d9;"></div><div class="b" style="left:40px;top:584px;width:2169px;height:1px;background:#d9d9d9;"></div><div class="b" style="left:40px;top:613px;width:2169px;height:1px;background:#d9d9d9;"></div><div class="b" style="left:40px;top:642px;width:2169px;height:1px;background:#d9d9d9;"></div><div class="b" style="left:40px;top:671px;width:2169px;height:1px;background:#d9d9d9;"></div><div class="b" style="left:40px;top:700px;width:2169px;height:1px;background:#d9d9d9;"></div><div class="b" style="left:40px;top:729px;width:2169px;height:1px;background:#d9d9d9;"></div><div class="b" style="left:40px;top:758px;width:2169px;height:1px;background:#d9d9d9;"></div><div class="b" style="left:40px;top:787px;width:2169px;height:1px;background:#d9d9d9;"></div><div class="b" style="left:40px;top:816px;width:2169px;height:1px;background:#d9d9d9;"></div><div class="b" style="left:40px;top:845px;width:2169px;height:1px;background:#d9d9d9;"></div><div class="b" style="left:40px;top:874px;width:2169px;height:1px;background:#d9d9d9;"></div><div class="b" style="left:40px;top:903px;width:2169px;height:1px;background:#d9d9d9;"></div><div class="b" style="left:40px;top:932px;width:2169px;height:1px;background:#d9d9d9;"></div><div class="b" style="left:40px;top:961px;width:2169px;height:1px;background:#d9d9d9;"></div><div class="b" style="left:40px;top:990px;width:2169px;height:1px;background:#d9d9d9;"></div><div class="b" style="left:40px;top:1019px;width:2169px;height:1px;background:#d9d9d9;"></div><div class="b" style="left:40px;top:1048px;width:2169px;height:1px;background:#d9d9d9;"></div><div class="b" style="left:40px;top:1077px;width:2169px;height:1px;background:#d9d9d9;"></div><div class="b" style="left:40px;top:1106px;width:2169px;height:1px;background:#d9d9d9;"></div><div class="b" style="left:40px;top:1135px;width:2169px;height:1px;background:#d9d9d9;"></div><div class="b" style="left:40px;top:1164px;width:2169px;height:1px;background:#d9d9d9;"></div><div class="b" style="left:40px;top:1193px;width:2169px;height:1px;background:#d9d9d9;"></div><div class="b" style="left:40px;top:1222px;width:2169px;height:1px;background:#d9d9d9;"></div><div class="b" style="left:40px;top:1251px;width:2169px;height:1px;background:#d9d9d9;"></div><div class="b" style="left:40px;top:1280px;width:2169px;height:1px;background:#d9d9d9;"></div><div class="b" style="left:40px;top:1309px;width:2169px;height:1px;background:#d9d9d9;"></div><div class="b" style="left:40px;top:1338px;width:2169px;height:1px;background:#d9d9d9;"></div><div class="b" style="left:40px;top:1367px;width:2169px;height:1px;background:#d9d9d9;"></div><div class="b" style="left:40px;top:1396px;width:2169px;height:1px;background:#d9d9d9;"></div><div class="b" style="left:40px;top:1425px;width:2169px;height:1px;background:#d9d9d9;"></div><div class="b" style="left:164px;top:441px;width:1px;height:27px;background:#4d4d4d;"></div><div class="b" style="left:371px;top:441px;width:1px;height:27px;background:#4d4d4d;"></div><div class="b" style="left:573px;top:441px;width:1px;height:27px;background:#4d4d4d;"></div><div class="b" style="left:732px;top:441px;width:1px;height:27px;background:#4d4d4d;"></div><div class="b" style="left:861px;top:441px;width:1px;height:27px;background:#4d4d4d;"></div><div class="b" style="left:957px;top:441px;width:1px;height:27px;background:#4d4d4d;"></div><div class="b" style="left:1053px;top:441px;width:1px;height:27px;background:#4d4d4d;"></div><div class="b" style="left:1149px;top:441px;width:1px;height:27px;background:#4d4d4d;"></div><div class="b" style="left:1245px;top:441px;width:1px;height:27px;background:#4d4d4d;"></div><div class="b" style="left:1341px;top:441px;width:1px;height:27px;background:#4d4d4d;"></div><div class="b" style="left:1437px;top:441px;width:1px;height:27px;background:#4d4d4d;"></div><div class="b" style="left:1533px;top:441px;width:1px;height:27px;background:#4d4d4d;"></div><div class="b" style="left:1629px;top:441px;width:1px;height:27px;background:#4d4d4d;"></div><div class="b" style="left:1725px;top:441px;width:1px;height:27px;background:#4d4d4d;"></div><div class="b" style="left:1821px;top:441px;width:1px;height:27px;background:#4d4d4d;"></div><div class="b" style="left:1917px;top:441px;width:1px;height:27px;background:#4d4d4d;"></div><div class="b" style="left:2013px;top:441px;width:1px;height:27px;background:#4d4d4d;"></div><div class="b" style="left:2109px;top:441px;width:1px;height:27px;background:#4d4d4d;"></div><div class="b" style="left:2205px;top:441px;width:1px;height:27px;background:#4d4d4d;"></div><div class="b" style="left:0px;top:468px;width:2209px;height:1px;background:#9e9e9e;"></div><div class="b" style="left:573px;top:466px;width:159px;height:2px;background:#107c41;"></div><div class="b" style="left:39px;top:441px;width:1px;height:1006px;background:#9e9e9e;"></div><div class="b" style="left:0px;top:497px;width:39px;height:1px;background:#5a5a5a;"></div><div class="b" style="left:0px;top:526px;width:39px;height:1px;background:#5a5a5a;"></div><div class="b" style="left:0px;top:555px;width:39px;height:1px;background:#5a5a5a;"></div><div class="b" style="left:0px;top:584px;width:39px;height:1px;background:#5a5a5a;"></div><div class="b" style="left:0px;top:613px;width:39px;height:1px;background:#5a5a5a;"></div><div class="b" style="left:0px;top:642px;width:39px;height:1px;background:#5a5a5a;"></div><div class="b" style="left:0px;top:671px;width:39px;height:1px;background:#5a5a5a;"></div><div class="b" style="left:0px;top:700px;width:39px;height:1px;background:#5a5a5a;"></div><div class="b" style="left:0px;top:729px;width:39px;height:1px;background:#5a5a5a;"></div><div class="b" style="left:0px;top:758px;width:39px;height:1px;background:#5a5a5a;"></div><div class="b" style="left:0px;top:787px;width:39px;height:1px;background:#5a5a5a;"></div><div class="b" style="left:0px;top:816px;width:39px;height:1px;background:#5a5a5a;"></div><div class="b" style="left:0px;top:845px;width:39px;height:1px;background:#5a5a5a;"></div><div class="b" style="left:0px;top:874px;width:39px;height:1px;background:#5a5a5a;"></div><div class="b" style="left:0px;top:903px;width:39px;height:1px;background:#5a5a5a;"></div><div class="b" style="left:0px;top:932px;width:39px;height:1px;background:#5a5a5a;"></div><div class="b" style="left:0px;top:961px;width:39px;height:1px;background:#5a5a5a;"></div><div class="b" style="left:0px;top:990px;width:39px;height:1px;background:#5a5a5a;"></div><div class="b" style="left:0px;top:1019px;width:39px;height:1px;background:#5a5a5a;"></div><div class="b" style="left:0px;top:1048px;width:39px;height:1px;background:#5a5a5a;"></div><div class="b" style="left:0px;top:1077px;width:39px;height:1px;background:#5a5a5a;"></div><div class="b" style="left:0px;top:1106px;width:39px;height:1px;background:#5a5a5a;"></div><div class="b" style="left:0px;top:1135px;width:39px;height:1px;background:#5a5a5a;"></div><div class="b" style="left:0px;top:1164px;width:39px;height:1px;background:#5a5a5a;"></div><div class="b" style="left:0px;top:1193px;width:39px;height:1px;background:#5a5a5a;"></div><div class="b" style="left:0px;top:1222px;width:39px;height:1px;background:#5a5a5a;"></div><div class="b" style="left:0px;top:1251px;width:39px;height:1px;background:#5a5a5a;"></div><div class="b" style="left:0px;top:1280px;width:39px;height:1px;background:#5a5a5a;"></div><div class="b" style="left:0px;top:1309px;width:39px;height:1px;background:#5a5a5a;"></div><div class="b" style="left:0px;top:1338px;width:39px;height:1px;background:#5a5a5a;"></div><div class="b" style="left:0px;top:1367px;width:39px;height:1px;background:#5a5a5a;"></div><div class="b" style="left:0px;top:1396px;width:39px;height:1px;background:#5a5a5a;"></div><div class="b" style="left:0px;top:1425px;width:39px;height:1px;background:#5a5a5a;"></div><div class="b" style="left:38px;top:1164px;width:2px;height:29px;background:#107c41;"></div><svg class="b" style="left:15px;top:445px;" width="22" height="20" viewBox="0 0 22 20"><path d="M21 0 L21 19 L0 19 Z" fill="#6e6e6e"/></svg><div class="t" style="left:95.33px;top:446.07px;font-size:20px;color:#f2f2f2;">A</div><div class="t" style="left:261.04px;top:446.07px;font-size:20px;color:#f2f2f2;">B</div><div class="t" style="left:465.15px;top:446.07px;font-size:20px;color:#f2f2f2;">C</div><div class="t" style="left:645.44px;top:446.07px;font-size:20px;color:#f2f2f2;">D</div><div class="t" style="left:789.94px;top:446.07px;font-size:20px;color:#f2f2f2;">E</div><div class="t" style="left:902.97px;top:446.07px;font-size:20px;color:#f2f2f2;">F</div><div class="t" style="left:997.97px;top:446.07px;font-size:20px;color:#f2f2f2;">G</div><div class="t" style="left:1094.27px;top:446.07px;font-size:20px;color:#f2f2f2;">H</div><div class="t" style="left:1194.72px;top:446.07px;font-size:20px;color:#f2f2f2;">I</div><div class="t" style="left:1289.09px;top:446.07px;font-size:20px;color:#f2f2f2;">J</div><div class="t" style="left:1382.12px;top:446.07px;font-size:20px;color:#f2f2f2;">K</div><div class="t" style="left:1479.45px;top:446.07px;font-size:20px;color:#f2f2f2;">L</div><div class="t" style="left:1573.17px;top:446.07px;font-size:20px;color:#f2f2f2;">M</div><div class="t" style="left:1670.27px;top:446.07px;font-size:20px;color:#f2f2f2;">N</div><div class="t" style="left:1765.73px;top:446.07px;font-size:20px;color:#f2f2f2;">O</div><div class="t" style="left:1862.54px;top:446.07px;font-size:20px;color:#f2f2f2;">P</div><div class="t" style="left:1957.73px;top:446.07px;font-size:20px;color:#f2f2f2;">Q</div><div class="t" style="left:2053.92px;top:446.07px;font-size:20px;color:#f2f2f2;">R</div><div class="t" style="left:2150.83px;top:446.07px;font-size:20px;color:#f2f2f2;">S</div><div class="t" style="left:13.67px;top:474.07px;font-size:20px;color:#f2f2f2;">1</div><div class="t" style="left:13.94px;top:503.07px;font-size:20px;color:#f2f2f2;">2</div><div class="t" style="left:14.00px;top:532.07px;font-size:20px;color:#f2f2f2;">3</div><div class="t" style="left:14.00px;top:561.07px;font-size:20px;color:#f2f2f2;">4</div><div class="t" style="left:13.96px;top:590.07px;font-size:20px;color:#f2f2f2;">5</div><div class="t" style="left:13.87px;top:619.07px;font-size:20px;color:#f2f2f2;">6</div><div class="t" style="left:13.93px;top:648.07px;font-size:20px;color:#f2f2f2;">7</div><div class="t" style="left:13.94px;top:677.07px;font-size:20px;color:#f2f2f2;">8</div><div class="t" style="left:13.94px;top:706.07px;font-size:20px;color:#f2f2f2;">9</div><div class="t" style="left:8.01px;top:735.07px;font-size:20px;color:#f2f2f2;">10</div><div class="t" style="left:8.10px;top:764.07px;font-size:20px;color:#f2f2f2;">11</div><div class="t" style="left:8.12px;top:793.07px;font-size:20px;color:#f2f2f2;">12</div><div class="t" style="left:8.05px;top:822.07px;font-size:20px;color:#f2f2f2;">13</div><div class="t" style="left:7.91px;top:851.07px;font-size:20px;color:#f2f2f2;">14</div><div class="t" style="left:8.04px;top:880.07px;font-size:20px;color:#f2f2f2;">15</div><div class="t" style="left:8.05px;top:909.07px;font-size:20px;color:#f2f2f2;">16</div><div class="t" style="left:8.12px;top:938.07px;font-size:20px;color:#f2f2f2;">17</div><div class="t" style="left:8.05px;top:967.07px;font-size:20px;color:#f2f2f2;">18</div><div class="t" style="left:8.09px;top:996.07px;font-size:20px;color:#f2f2f2;">19</div><div class="t" style="left:8.26px;top:1025.07px;font-size:20px;color:#f2f2f2;">20</div><div class="t" style="left:8.36px;top:1054.07px;font-size:20px;color:#f2f2f2;">21</div><div class="t" style="left:8.38px;top:1083.07px;font-size:20px;color:#f2f2f2;">22</div><div class="t" style="left:8.31px;top:1112.07px;font-size:20px;color:#f2f2f2;">23</div><div class="t" style="left:8.17px;top:1141.07px;font-size:20px;color:#f2f2f2;">24</div><div class="t" style="left:8.29px;top:1170.07px;font-size:20px;color:#f2f2f2;">25</div><div class="t" style="left:8.31px;top:1199.07px;font-size:20px;color:#f2f2f2;">26</div><div class="t" style="left:8.38px;top:1228.07px;font-size:20px;color:#f2f2f2;">27</div><div class="t" style="left:8.31px;top:1257.07px;font-size:20px;color:#f2f2f2;">28</div><div class="t" style="left:8.35px;top:1286.07px;font-size:20px;color:#f2f2f2;">29</div><div class="t" style="left:8.39px;top:1315.07px;font-size:20px;color:#f2f2f2;">30</div><div class="t" style="left:8.48px;top:1344.07px;font-size:20px;color:#f2f2f2;">31</div><div class="t" style="left:8.50px;top:1373.07px;font-size:20px;color:#f2f2f2;">32</div><div class="t" style="left:8.44px;top:1402.07px;font-size:20px;color:#f2f2f2;">33</div><div class="t" style="left:8.29px;top:1431.07px;font-size:20px;color:#f2f2f2;">34</div><div class="b" style="left:40px;top:469px;width:821px;height:28px;background:#4ea72e;"></div><div class="b" style="left:40px;top:498px;width:821px;height:28px;background:#daf2d0;"></div><div class="b" style="left:40px;top:526px;width:821px;height:1px;background:#8ed973;"></div><div class="b" style="left:40px;top:555px;width:821px;height:1px;background:#8ed973;"></div><div class="b" style="left:40px;top:556px;width:821px;height:28px;background:#daf2d0;"></div><div class="b" style="left:40px;top:584px;width:821px;height:1px;background:#8ed973;"></div><div class="b" style="left:40px;top:613px;width:821px;height:1px;background:#8ed973;"></div><div class="b" style="left:40px;top:614px;width:821px;height:28px;background:#daf2d0;"></div><div class="b" style="left:40px;top:642px;width:821px;height:1px;background:#8ed973;"></div><div class="b" style="left:40px;top:671px;width:821px;height:1px;background:#8ed973;"></div><div class="b" style="left:40px;top:672px;width:821px;height:28px;background:#daf2d0;"></div><div class="b" style="left:40px;top:700px;width:821px;height:1px;background:#8ed973;"></div><div class="b" style="left:40px;top:729px;width:821px;height:1px;background:#8ed973;"></div><div class="b" style="left:40px;top:730px;width:821px;height:28px;background:#daf2d0;"></div><div class="b" style="left:40px;top:758px;width:821px;height:1px;background:#8ed973;"></div><div class="b" style="left:40px;top:787px;width:821px;height:1px;background:#8ed973;"></div><div class="b" style="left:40px;top:788px;width:821px;height:28px;background:#daf2d0;"></div><div class="b" style="left:40px;top:816px;width:821px;height:1px;background:#8ed973;"></div><div class="b" style="left:40px;top:845px;width:821px;height:1px;background:#8ed973;"></div><div class="b" style="left:40px;top:846px;width:821px;height:28px;background:#daf2d0;"></div><div class="b" style="left:40px;top:874px;width:821px;height:1px;background:#8ed973;"></div><div class="b" style="left:40px;top:903px;width:821px;height:1px;background:#8ed973;"></div><div class="b" style="left:40px;top:904px;width:821px;height:28px;background:#daf2d0;"></div><div class="b" style="left:40px;top:932px;width:821px;height:1px;background:#8ed973;"></div><div class="b" style="left:40px;top:961px;width:821px;height:1px;background:#8ed973;"></div><div class="b" style="left:40px;top:962px;width:821px;height:28px;background:#daf2d0;"></div><div class="b" style="left:40px;top:990px;width:821px;height:1px;background:#8ed973;"></div><div class="b" style="left:40px;top:1019px;width:821px;height:1px;background:#8ed973;"></div><div class="b" style="left:40px;top:1020px;width:821px;height:28px;background:#daf2d0;"></div><div class="b" style="left:40px;top:1048px;width:821px;height:1px;background:#8ed973;"></div><div class="b" style="left:40px;top:497px;width:821px;height:1px;background:#8ed973;"></div><div class="b" style="left:861px;top:469px;width:1px;height:580px;background:#8ed973;"></div><div class="t" style="left:42.53px;top:474.42px;font-size:19px;color:#ffffff;font-weight:700;">Packet ID</div><div class="t" style="left:171.03px;top:474.42px;font-size:19px;color:#ffffff;font-weight:700;">Encoded Data</div><div class="t" style="left:379.09px;top:474.42px;font-size:19px;color:#ffffff;font-weight:700;">Timestamp (UTC)</div><div class="t" style="left:580.73px;top:474.42px;font-size:19px;color:#ffffff;font-weight:700;">Region</div><div class="t" style="left:739.05px;top:474.42px;font-size:19px;color:#ffffff;font-weight:700;">Sequence</div><div class="b" style="left:138px;top:471px;width:25px;height:25px;background:linear-gradient(#fbfbfd,#e6e6ee);border:1px solid #b4b4c4;box-sizing:border-box;"></div><svg class="b" style="left:145.5px;top:481px;" width="10" height="6" viewBox="0 0 10 6"><path d="M0 0 L9.6 0 L4.8 5.2 Z" fill="#5a5a5e"/></svg><div class="b" style="left:345px;top:471px;width:25px;height:25px;background:linear-gradient(#fbfbfd,#e6e6ee);border:1px solid #b4b4c4;box-sizing:border-box;"></div><svg class="b" style="left:352.5px;top:481px;" width="10" height="6" viewBox="0 0 10 6"><path d="M0 0 L9.6 0 L4.8 5.2 Z" fill="#5a5a5e"/></svg><div class="b" style="left:547px;top:471px;width:25px;height:25px;background:linear-gradient(#fbfbfd,#e6e6ee);border:1px solid #b4b4c4;box-sizing:border-box;"></div><svg class="b" style="left:554.5px;top:481px;" width="10" height="6" viewBox="0 0 10 6"><path d="M0 0 L9.6 0 L4.8 5.2 Z" fill="#5a5a5e"/></svg><div class="b" style="left:706px;top:471px;width:25px;height:25px;background:linear-gradient(#fbfbfd,#e6e6ee);border:1px solid #b4b4c4;box-sizing:border-box;"></div><svg class="b" style="left:713.5px;top:481px;" width="10" height="6" viewBox="0 0 10 6"><path d="M0 0 L9.6 0 L4.8 5.2 Z" fill="#5a5a5e"/></svg><div class="b" style="left:836px;top:471px;width:25px;height:25px;background:linear-gradient(#fbfbfd,#e6e6ee);border:1px solid #b4b4c4;box-sizing:border-box;"></div><svg class="b" style="left:839px;top:474px;" width="20" height="20" viewBox="0 0 20 20"><path d="M1.7 13.2 L10.9 13.2 L6.3 17.8 Z" fill="#5a5a5e"/><path d="M14.8 16 L14.8 3.5" stroke="#4a4a4e" stroke-width="1.7" fill="none"/><path d="M12.3 6.4 L14.8 2.4 L17.3 6.4 Z" fill="#4a4a4e"/></svg><div class="t" style="left:42.47px;top:532.07px;font-size:20px;color:#000;transform:scaleX(0.9338);">PCK077</div><div class="t" style="left:171.06px;top:532.07px;font-size:20px;color:#000;transform:scaleX(0.9312);">Uk9VVEVfT0s=</div><div class="t" style="left:436.83px;top:532.07px;font-size:20px;color:#000;">30/7/2025 0:04</div><div class="t" style="left:580.69px;top:532.07px;font-size:20px;color:#000;transform:scaleX(0.8893);">SA-EAST</div><div class="t" style="left:738.36px;top:532.07px;font-size:20px;color:#000;">(expired)</div><div class="t" style="left:42.47px;top:561.07px;font-size:20px;color:#000;transform:scaleX(0.9338);">PCK048</div><div class="t" style="left:170.99px;top:561.07px;font-size:20px;color:#000;transform:scaleX(0.9174);">RE5TX0ZBSUw=</div><div class="t" style="left:437.25px;top:561.07px;font-size:20px;color:#000;">30/7/2025 0:07</div><div class="t" style="left:580.13px;top:561.07px;font-size:20px;color:#000;transform:scaleX(0.8863);">US-CENTRAL</div><div class="t" style="left:738.36px;top:561.07px;font-size:20px;color:#000;">(expired)</div><div class="t" style="left:42.47px;top:590.07px;font-size:20px;color:#000;transform:scaleX(0.9338);">PCK043</div><div class="t" style="left:172.42px;top:590.07px;font-size:20px;color:#000;transform:scaleX(0.9141);">VVhMX0NBQ0hF</div><div class="t" style="left:437.25px;top:590.07px;font-size:20px;color:#000;">30/7/2025 0:22</div><div class="t" style="left:580.13px;top:590.07px;font-size:20px;color:#000;transform:scaleX(0.8887);">US-WEST</div><div class="t" style="left:738.36px;top:590.07px;font-size:20px;color:#000;">(expired)</div><div class="t" style="left:42.47px;top:619.07px;font-size:20px;color:#000;transform:scaleX(0.9338);">PCK067</div><div class="t" style="left:171.08px;top:619.07px;font-size:20px;color:#000;transform:scaleX(0.9230);">U1RBUlRfU0VTUw==</div><div class="t" style="left:426.07px;top:619.07px;font-size:20px;color:#000;">29/7/2025 23:59</div><div class="t" style="left:580.04px;top:619.07px;font-size:20px;color:#000;transform:scaleX(0.8892);">EU-EAST</div><div class="t" style="left:738.36px;top:619.07px;font-size:20px;color:#000;">(expired)</div><div class="t" style="left:42.47px;top:648.07px;font-size:20px;color:#000;transform:scaleX(0.9338);">PCK092</div><div class="t" style="left:171.03px;top:648.07px;font-size:20px;color:#000;transform:scaleX(0.8983);">RUFRV9OT0RF</div><div class="t" style="left:437.25px;top:648.07px;font-size:20px;color:#000;">30/7/2025 0:12</div><div class="t" style="left:581.47px;top:648.07px;font-size:20px;color:#000;transform:scaleX(0.8877);">AP-SOUTH</div><div class="t" style="left:738.36px;top:648.07px;font-size:20px;color:#000;">(expired)</div><div class="t" style="left:42.47px;top:677.07px;font-size:20px;color:#000;transform:scaleX(0.9338);">PCK012</div><div class="t" style="left:172.42px;top:677.07px;font-size:20px;color:#000;transform:scaleX(0.9253);">Wl9aUEM=</div><div class="t" style="left:425.90px;top:677.07px;font-size:20px;color:#000;">29/7/2025 23:50</div><div class="t" style="left:580.13px;top:677.07px;font-size:20px;color:#000;transform:scaleX(0.8887);">US-WEST</div><div class="t" style="left:738.36px;top:677.07px;font-size:20px;color:#000;">(expired)</div><div class="t" style="left:42.47px;top:706.07px;font-size:20px;color:#000;transform:scaleX(0.9338);">PCK078</div><div class="t" style="left:172.42px;top:706.07px;font-size:20px;color:#000;transform:scaleX(0.9237);">V1hNQFdDXQ==</div><div class="t" style="left:437.08px;top:706.07px;font-size:20px;color:#000;">30/7/2025 0:25</div><div class="t" style="left:580.69px;top:706.07px;font-size:20px;color:#000;transform:scaleX(0.8893);">SA-EAST</div><div class="t" style="left:738.36px;top:706.07px;font-size:20px;color:#000;">(expired)</div><div class="t" style="left:42.47px;top:735.07px;font-size:20px;color:#000;transform:scaleX(0.9338);">PCK090</div><div class="t" style="left:171.01px;top:735.07px;font-size:20px;color:#000;transform:scaleX(0.9064);">RFlAQl9G</div><div class="t" style="left:437.02px;top:735.07px;font-size:20px;color:#000;">30/7/2025 0:30</div><div class="t" style="left:580.13px;top:735.07px;font-size:20px;color:#000;transform:scaleX(0.8863);">US-CENTRAL</div><div class="t" style="left:738.36px;top:735.07px;font-size:20px;color:#000;">(expired)</div><div class="t" style="left:42.47px;top:764.07px;font-size:20px;color:#000;transform:scaleX(0.9338);">PCK007</div><div class="t" style="left:171.10px;top:764.07px;font-size:20px;color:#000;transform:scaleX(0.9068);">UFJPRF9XRQ==</div><div class="t" style="left:426.07px;top:764.07px;font-size:20px;color:#000;">29/7/2025 23:49</div><div class="t" style="left:580.04px;top:764.07px;font-size:20px;color:#000;transform:scaleX(0.8876);">EU-NORTH</div><div class="t" style="left:738.36px;top:764.07px;font-size:20px;color:#000;">(expired)</div><div class="t" style="left:42.47px;top:793.07px;font-size:20px;color:#000;transform:scaleX(0.9338);">PCK110</div><div class="t" style="left:170.99px;top:793.07px;font-size:20px;color:#000;transform:scaleX(0.9188);">RVRfUElORw==</div><div class="t" style="left:437.02px;top:793.07px;font-size:20px;color:#000;">30/7/2025 0:20</div><div class="t" style="left:581.47px;top:793.07px;font-size:20px;color:#000;transform:scaleX(0.8893);">AP-EAST</div><div class="t" style="left:738.36px;top:793.07px;font-size:20px;color:#000;">(expired)</div><div class="t" style="left:42.47px;top:822.07px;font-size:20px;color:#000;transform:scaleX(0.9338);">PCK089</div><div class="t" style="left:172.08px;top:822.07px;font-size:20px;color:#000;transform:scaleX(0.9325);">XFdVVE9fT0s=</div><div class="t" style="left:437.08px;top:822.07px;font-size:20px;color:#000;">30/7/2025 0:05</div><div class="t" style="left:580.04px;top:822.07px;font-size:20px;color:#000;transform:scaleX(0.8887);">EU-WEST</div><div class="t" style="left:738.36px;top:822.07px;font-size:20px;color:#000;">(expired)</div><div class="t" style="left:42.47px;top:851.07px;font-size:20px;color:#000;transform:scaleX(0.9338);">PCK099</div><div class="t" style="left:171.08px;top:851.07px;font-size:20px;color:#000;transform:scaleX(0.9187);">U1NMX09L</div><div class="t" style="left:426.00px;top:851.07px;font-size:20px;color:#000;">29/7/2025 23:56</div><div class="t" style="left:581.47px;top:851.07px;font-size:20px;color:#000;transform:scaleX(0.8851);">AP-NORTHEAST</div><div class="t" style="left:738.36px;top:851.07px;font-size:20px;color:#000;">(expired)</div><div class="t" style="left:42.47px;top:880.07px;font-size:20px;color:#000;transform:scaleX(0.9338);">PCK028</div><div class="t" style="left:171.24px;top:880.07px;font-size:20px;color:#000;transform:scaleX(0.9805);">b25lIHplcm8=</div><div class="t" style="left:426.00px;top:880.07px;font-size:20px;color:#000;">29/7/2025 23:53</div><div class="t" style="left:580.13px;top:880.07px;font-size:20px;color:#000;transform:scaleX(0.8892);">US-EAST</div><div class="t" style="left:738.08px;top:880.07px;font-size:20px;color:#000;">1</div><div class="t" style="left:42.47px;top:909.07px;font-size:20px;color:#000;transform:scaleX(0.9338);">PCK032</div><div class="t" style="left:171.27px;top:909.07px;font-size:20px;color:#000;transform:scaleX(0.9557);">b25lIG9uZQ==</div><div class="t" style="left:425.71px;top:909.07px;font-size:20px;color:#000;">29/7/2025 23:54</div><div class="t" style="left:580.13px;top:909.07px;font-size:20px;color:#000;transform:scaleX(0.8892);">US-EAST</div><div class="t" style="left:738.59px;top:909.07px;font-size:20px;color:#000;">2</div><div class="t" style="left:42.47px;top:938.07px;font-size:20px;color:#000;transform:scaleX(0.9338);">PCK034</div><div class="t" style="left:171.69px;top:938.07px;font-size:20px;color:#000;transform:scaleX(0.9475);">emVybyB6ZXJv</div><div class="t" style="left:425.96px;top:938.07px;font-size:20px;color:#000;">29/7/2025 23:55</div><div class="t" style="left:580.04px;top:938.07px;font-size:20px;color:#000;transform:scaleX(0.8887);">EU-WEST</div><div class="t" style="left:738.84px;top:938.07px;font-size:20px;color:#000;">3</div><div class="t" style="left:42.47px;top:967.07px;font-size:20px;color:#000;transform:scaleX(0.9338);">PCK041</div><div class="t" style="left:171.29px;top:967.07px;font-size:20px;color:#000;transform:scaleX(0.9351);">b25lIG9uZSB6ZXJv</div><div class="t" style="left:437.22px;top:967.07px;font-size:20px;color:#000;">30/7/2025 0:01</div><div class="t" style="left:580.05px;top:967.07px;font-size:20px;color:#000;transform:scaleX(0.8863);">EU-CENTRAL</div><div class="t" style="left:739.14px;top:967.07px;font-size:20px;color:#000;">4</div><div class="t" style="left:42.47px;top:996.07px;font-size:20px;color:#000;transform:scaleX(0.9338);">PCK055</div><div class="t" style="left:171.21px;top:996.07px;font-size:20px;color:#000;">b25l</div><div class="t" style="left:437.02px;top:996.07px;font-size:20px;color:#000;">30/7/2025 0:10</div><div class="t" style="left:581.47px;top:996.07px;font-size:20px;color:#000;transform:scaleX(0.8877);">AP-SOUTH</div><div class="t" style="left:738.80px;top:996.07px;font-size:20px;color:#000;">5</div><div class="t" style="left:42.47px;top:1025.07px;font-size:20px;color:#000;transform:scaleX(0.9338);">PCK065</div><div class="t" style="left:171.90px;top:1025.07px;font-size:20px;color:#000;transform:scaleX(0.9466);">ZW5kIG9mIGxpbmU=</div><div class="t" style="left:436.83px;top:1025.07px;font-size:20px;color:#000;">30/7/2025 0:14</div><div class="t" style="left:581.47px;top:1025.07px;font-size:20px;color:#000;transform:scaleX(0.8851);">AP-NORTHEAST</div><div class="t" style="left:738.58px;top:1025.07px;font-size:20px;color:#000;">6</div><svg class="b" style="left:855px;top:1042px;" width="6" height="6" viewBox="0 0 6 6"><path d="M6 0 L6 6 L0 6 Z" fill="#4264b8"/></svg><div class="b" style="left:572px;top:1163px;width:162px;height:32px;border:2px solid #126b3a;box-sizing:border-box;"></div><div class="b" style="left:726.5px;top:1188.5px;width:9px;height:9px;background:#ffffff;"></div><div class="b" style="left:728px;top:1190px;width:6px;height:6px;background:#217346;"></div>
<div class="b" style="left:40px;top:1447px;width:2169px;height:12px;background:#ffffff;"></div><div class="b" style="left:0px;top:1447px;width:166px;height:48px;background:#0a0a0a;border-top-right-radius:9px"></div><div class="b" style="left:287px;top:1447px;width:1953px;height:48px;background:#0a0a0a;border-top-left-radius:9px"></div><div class="b" style="left:166px;top:1440px;width:121px;height:48px;background:#ffffff;border-bottom-left-radius:8px;border-bottom-right-radius:8px"></div><svg class="b" style="left:33px;top:1460px;" width="12" height="22" viewBox="0 0 12 22"><path d="M10 2 L2 11 L10 20" stroke="#9a9a9a" stroke-width="1.6" fill="none"/></svg><svg class="b" style="left:83px;top:1460px;" width="12" height="22" viewBox="0 0 12 22"><path d="M2 2 L10 11 L2 20" stroke="#9a9a9a" stroke-width="1.6" fill="none"/></svg><div class="t" style="left:178.22px;top:1458.07px;font-size:20px;color:#111111;transform:scaleX(1.0055);">f5_puzzle1</div><div class="b" style="left:178px;top:1483px;width:97px;height:3px;background:#107c41;"></div><div class="b" style="left:293px;top:1457px;width:1.5px;height:28px;background:#6a6a6a;"></div><div class="t" style="left:311.08px;top:1463.57px;font-size:20px;color:#ffffff;transform:scaleX(1.0081);">Sheet1</div><div class="b" style="left:392px;top:1457px;width:1.5px;height:28px;background:#6a6a6a;"></div><svg class="b" style="left:455px;top:1461px;" width="19" height="19" viewBox="0 0 19 19"><path d="M9.5 1 V18 M1 9.5 H18" stroke="#e0e0e0" stroke-width="1.6"/></svg>
<div class="b" style="left:2212px;top:440px;width:25px;height:1007px;background:#1a1a1a;border-radius:12px;"></div><svg class="b" style="left:2217px;top:447px;" width="16" height="12" viewBox="0 0 16 12"><path d="M8 1 L15 11 H1 Z" fill="#9a9a9a" stroke="#9a9a9a" stroke-width="1.5" stroke-linejoin="round"/></svg><div class="b" style="left:2219px;top:466px;width:12px;height:949px;background:#9a9a9a;border-radius:6px;"></div><svg class="b" style="left:2217px;top:1430px;" width="16" height="12" viewBox="0 0 16 12"><path d="M8 11 L15 1 H1 Z" fill="#9a9a9a" stroke="#9a9a9a" stroke-width="1.5" stroke-linejoin="round"/></svg><div class="b" style="left:1373px;top:1457px;width:840px;height:26px;background:#1a1a1a;border-radius:13px;"></div><svg class="b" style="left:1380px;top:1463px;" width="12" height="15" viewBox="0 0 12 15"><path d="M1 7.5 L11 1 V14 Z" fill="#9a9a9a" stroke="#9a9a9a" stroke-width="1.5" stroke-linejoin="round"/></svg><div class="b" style="left:1398px;top:1464px;width:754px;height:12px;background:#9a9a9a;border-radius:6px;"></div><svg class="b" style="left:2193px;top:1463px;" width="12" height="15" viewBox="0 0 12 15"><path d="M11 7.5 L1 1 V14 Z" fill="#9a9a9a" stroke="#9a9a9a" stroke-width="1.5" stroke-linejoin="round"/></svg><svg class="b" style="left:1346px;top:1463px;" width="6" height="17" viewBox="0 0 6 17"><rect x="0.5" y="0" width="4" height="3.5" fill="#e0e0e0"/><rect x="0.5" y="6.5" width="4" height="3.5" fill="#e0e0e0"/><rect x="0.5" y="13" width="4" height="3.5" fill="#e0e0e0"/></svg>
<div class="b" style="left:2240px;top:440px;width:1px;height:1055px;background:#3a3a3a;"></div><div class="t" style="left:2256.13px;top:460.80px;font-size:21.5px;color:#ffffff;font-weight:700;transform:scaleX(0.9843);">Queries &amp; Conne...</div><svg class="b" style="left:2467px;top:465px;" width="22" height="14" viewBox="0 0 22 14"><path d="M1.5 2 L11 11.5 L20.5 2" stroke="#f0f0f0" stroke-width="1.7" fill="none"/></svg><svg class="b" style="left:2519px;top:463px;" width="18" height="18" viewBox="0 0 18 18"><path d="M1.5 1.5 L16.5 16.5 M16.5 1.5 L1.5 16.5" stroke="#f0f0f0" stroke-width="1.7"/></svg><div class="b" style="left:2257px;top:500px;width:286px;height:952px;background:#262626;"></div><div class="t" style="left:2256.30px;top:512.19px;font-size:17.5px;color:#ffffff;font-weight:700;transform:scaleX(0.9806);">Queries</div><div class="b" style="left:2331px;top:506px;width:1.5px;height:27px;background:#b0b0b0;"></div><div class="t" style="left:2345.59px;top:512.19px;font-size:17.5px;color:#ffffff;transform:scaleX(1.0286);">Connections</div><div class="b" style="left:2257px;top:537px;width:62px;height:5px;background:#ffffff;"></div><div class="t" style="left:2256.75px;top:557.53px;font-size:16.5px;color:#ffffff;transform:scaleX(0.9954);">1 query</div><div class="b" style="left:2257px;top:579px;width:286px;height:2px;background:#bdbdbd;"></div><div class="b" style="left:2257px;top:593px;width:286px;height:75px;background:#217346;"></div><svg class="b" style="left:2263px;top:603px;" width="23" height="20" viewBox="0 0 23 20"><rect x="1" y="1" width="21" height="18" stroke="#ffffff" stroke-width="1.6" fill="none"/><path d="M1 5.5 H22 M1 10 H22 M1 14.5 H22 M8 5.5 V19 M15 5.5 V19" stroke="#ffffff" stroke-width="1.4"/><rect x="1" y="1" width="21" height="4.5" fill="#ffffff"/></svg><div class="t" style="left:2293.22px;top:603.72px;font-size:21px;color:#e6f0ea;transform:scaleX(0.9576);">f5_puzzle1</div><div class="t" style="left:2292.52px;top:638.42px;font-size:19px;color:#f0f4f0;transform:scaleX(1.0232);">19 rows loaded.</div><div class="b" style="left:2257px;top:1452px;width:286px;height:25px;background:#f0f0f0;"></div><div class="b" style="left:2291px;top:1453px;width:153px;height:23px;background:#c8c8c8;"></div><svg class="b" style="left:2269px;top:1454px;" width="19" height="21" viewBox="0 0 19 21"><path d="M15 2 L5 10.5 L15 19" stroke="#5f5f5f" stroke-width="4" fill="none"/></svg><svg class="b" style="left:2512px;top:1454px;" width="19" height="21" viewBox="0 0 19 21"><path d="M4 2 L14 10.5 L4 19" stroke="#5f5f5f" stroke-width="4" fill="none"/></svg>
<div class="b" style="left:0px;top:1495px;width:2560px;height:33px;background:#161616;"></div><div class="b" style="left:0px;top:1495px;width:2560px;height:1px;background:#2e2e2e;"></div><div class="t" style="left:15.27px;top:1504.03px;font-size:16.5px;color:#e0e0e0;transform:scaleX(0.9069);">Ready</div><svg class="b" style="left:87px;top:1500px;" width="24" height="24" viewBox="0 0 24 24"><g stroke="#ececec" stroke-width="1.6" fill="none" stroke-linecap="round" stroke-linejoin="round"><circle cx="10.5" cy="5" r="3.3"/><path d="M2.3 9.5 Q3.5 8 5 9 Q10.5 11.5 16 9 Q17.6 8 18.8 9.5 Q19.5 11 17.5 12 L13.2 13.6 V15.8"/><path d="M2.3 9.5 Q1.6 11 3.5 12 L7.8 13.6 V17 L5.6 21.5 Q5.3 23 7 22.8 L9.6 18.6"/><path d="M13.6 16.8 L21.8 23 M21.8 16.8 L13.6 23"/></g></svg><div class="t" style="left:115.11px;top:1504.03px;font-size:16.5px;color:#f0f0f0;font-weight:700;transform:scaleX(0.9532);">Accessibility: Investigate</div><div class="b" style="left:2114px;top:1496px;width:60px;height:32px;background:#2a2a2a;"></div><svg class="b" style="left:2133px;top:1501px;" width="20" height="20" viewBox="0 0 20 20"><rect x="1" y="1" width="18" height="18" stroke="#f0f0f0" stroke-width="1.6" fill="none"/><path d="M7 1 V19 M13 1 V19 M1 7 H19 M1 13 H19" stroke="#f0f0f0" stroke-width="1.5"/></svg><svg class="b" style="left:2193px;top:1501px;" width="22" height="20" viewBox="0 0 22 20"><rect x="1" y="1" width="20" height="18" stroke="#f0f0f0" stroke-width="1.6" fill="none"/><rect x="5" y="4.5" width="12" height="11" stroke="#f0f0f0" stroke-width="1.3" fill="none"/><path d="M7.5 8 H14.5 M7.5 10.5 H14.5 M7.5 13 H14.5" stroke="#f0f0f0" stroke-width="1.2"/></svg><svg class="b" style="left:2253px;top:1501px;" width="22" height="20" viewBox="0 0 22 20"><rect x="1" y="1" width="20" height="18" stroke="#f0f0f0" stroke-width="1.6" fill="none"/><path d="M1 10 H13.5 V1 M5.5 1 V10" stroke="#f0f0f0" stroke-width="1.5" fill="none"/></svg><div class="b" style="left:2302px;top:1511px;width:11px;height:1.5px;background:#c0c0c0;"></div><div class="b" style="left:2322px;top:1511px;width:148px;height:1.5px;background:#a0a0a0;"></div><div class="b" style="left:2392px;top:1503px;width:8px;height:17px;background:#a8a8a8;"></div><svg class="b" style="left:2477px;top:1505px;" width="13" height="13" viewBox="0 0 13 13"><path d="M6.5 0 V13 M0 6.5 H13" stroke="#e0e0e0" stroke-width="1.5"/></svg><div class="t" style="left:2507.79px;top:1504.03px;font-size:16.5px;color:#e8e8e8;transform:scaleX(0.9664);">100%</div></body></html>
